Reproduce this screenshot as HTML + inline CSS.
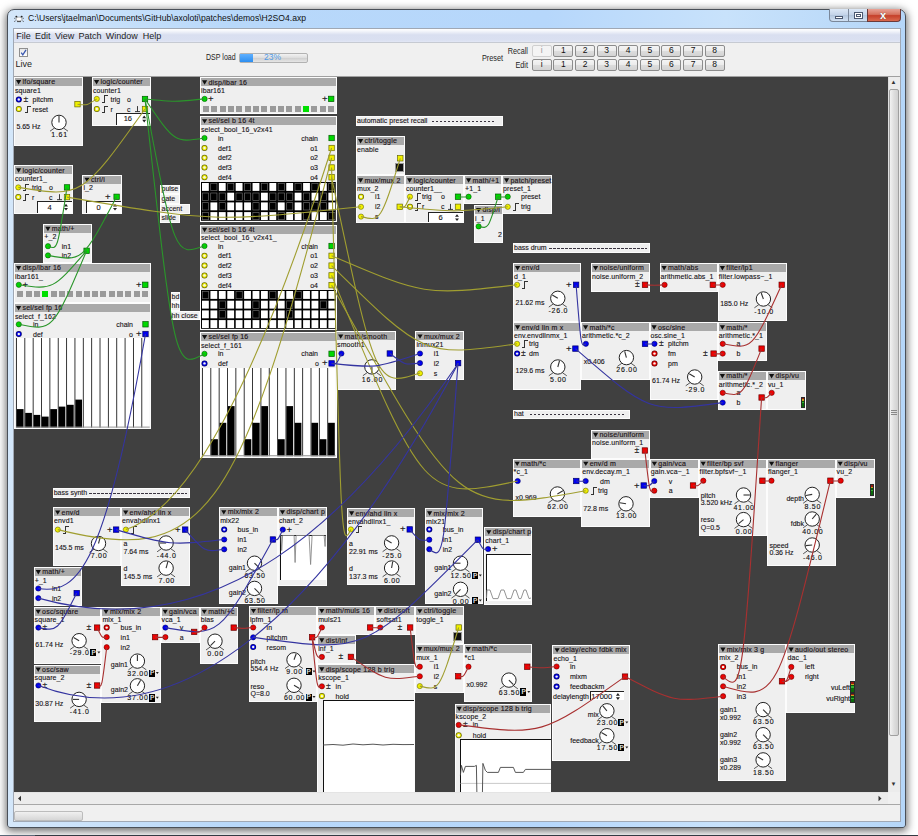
<!DOCTYPE html><html><head><meta charset="utf-8"><style>
*{margin:0;padding:0}
html,body{width:918px;height:836px;overflow:hidden;background:#fff;position:relative;font-family:"Liberation Sans",sans-serif}
.t{position:absolute;white-space:pre;line-height:1;font-family:"Liberation Sans",sans-serif}
.o{position:absolute;background:#efefef;border:1px solid #fcfcfc;box-sizing:border-box}
.hd{position:absolute;height:8px;background:#a9a9a9}
.s{position:absolute;overflow:visible}
.r{position:absolute}
</style></head><body>
<div style="position:absolute;left:7px;top:8.5px;width:899px;height:819px;border-radius:7px 7px 3px 3px;box-shadow:0 2px 9px 1px rgba(0,0,0,0.6);background:linear-gradient(90deg,#d4e7fa,#b8d8fa 25%,#b6d7fb 60%,#c8e2fb 80%,#b5d6f8);border:1px solid #4a5058;box-sizing:border-box"></div>
<svg style="position:absolute;left:13px;top:14px" width="12" height="10"><circle cx="3.4" cy="2.8" r="1" fill="#222"/><circle cx="8.6" cy="2.8" r="1" fill="#222"/><ellipse cx="6" cy="5" rx="3" ry="2" fill="#fff" stroke="#888" stroke-width="0.6"/><path d="M4 7.6h4" stroke="#333" stroke-width="0.9"/><path d="M1.2 4.2l1.2 0.6M10.8 4.2l-1.2 0.6M1.2 7.6l1.4-0.8M10.8 7.6l-1.4-0.8" stroke="#444" stroke-width="0.8"/></svg>
<div class="t" style="left:28px;top:14px;font-size:8.6px;color:#111">C:\Users\jtaelman\Documents\GitHub\axoloti\patches\demos\H2SO4.axp</div>
<div style="position:absolute;left:829px;top:9px;width:20px;height:13px;border:1px solid #7a8799;border-top:none;border-radius:0 0 0 4px;box-sizing:border-box;background:linear-gradient(#dce8f6,#c3d3e8 50%,#b3c6de 51%,#d0e0f2)"></div>
<div style="position:absolute;left:835px;top:16px;width:8px;height:3px;border:1px solid #4b5870;background:#fff;box-sizing:border-box"></div>
<div style="position:absolute;left:849px;top:9px;width:19px;height:13px;border:1px solid #7a8799;border-top:none;border-left:none;box-sizing:border-box;background:linear-gradient(#dce8f6,#c3d3e8 50%,#b3c6de 51%,#d0e0f2)"></div>
<div style="position:absolute;left:854px;top:12px;width:9px;height:7px;border:1px solid #4b5870;background:#fff;box-sizing:border-box"><div style="position:absolute;left:1px;top:1px;width:5px;height:3px;border:1px solid #4b5870;box-sizing:border-box"></div></div>
<div style="position:absolute;left:867px;top:9px;width:34px;height:13px;border:1px solid #6b3a3a;border-top:none;border-radius:0 0 4px 0;box-sizing:border-box;background:linear-gradient(#e8a397,#d6735f 45%,#c6402a 55%,#d9694e)"></div>
<div class="t" style="left:880px;top:9.5px;font-size:11px;font-weight:bold;color:#fff;text-shadow:0 0 1px #444">x</div>
<div style="position:absolute;left:13px;top:28px;width:888px;height:794px;background:#f0f0f0;border:1px solid #a0a8b4;box-sizing:border-box"></div>
<div style="position:absolute;left:14px;top:29px;width:886px;height:14px;background:linear-gradient(#ffffff,#f4f6fb 15%,#d9dff0 45%,#dae0f1 85%,#e2e7f5);border-bottom:1px solid #c6cad2;box-sizing:border-box"></div>
<div class="t" style="left:16.3px;top:31.5px;font-size:9px;color:#1e1e1e">File</div>
<div class="t" style="left:34.9px;top:31.5px;font-size:9px;color:#1e1e1e">Edit</div>
<div class="t" style="left:54.9px;top:31.5px;font-size:9px;color:#1e1e1e">View</div>
<div class="t" style="left:78.4px;top:31.5px;font-size:9px;color:#1e1e1e">Patch</div>
<div class="t" style="left:105.7px;top:31.5px;font-size:9px;color:#1e1e1e">Window</div>
<div class="t" style="left:142.7px;top:31.5px;font-size:9px;color:#1e1e1e">Help</div>
<div style="position:absolute;left:18.5px;top:47.5px;width:9px;height:9px;border:1px solid #8f8f8f;background:linear-gradient(#e6e6e6,#ffffff);box-sizing:border-box"></div>
<svg style="position:absolute;left:18.5px;top:47.5px" width="9" height="9"><path d="M2.2 4.6l1.6 2.2l3.2-5" stroke="#3a58b0" stroke-width="1.3" fill="none"/></svg>
<div class="t" style="left:15.5px;top:60px;font-size:9px;color:#1e1e1e">Live</div>
<div class="t" style="left:206px;top:53px;font-size:8.6px;color:#1e1e1e;transform:scaleX(0.82);transform-origin:0 0">DSP load</div>
<div style="position:absolute;left:238.5px;top:52.5px;width:69px;height:10px;border:1px solid #b2b2b2;border-radius:2px;background:linear-gradient(#f2f2f2,#dcdcdc 50%,#cfcfcf 51%,#e6e6e6);box-sizing:border-box"></div>
<div style="position:absolute;left:239.5px;top:53.5px;width:13.5px;height:8px;background:linear-gradient(#5fb0ff,#2d8ef0)"></div>
<div class="t" style="left:264px;top:52.5px;font-size:8.5px;color:#4f9ae6">23%</div>
<div class="t" style="left:482.4px;top:54px;font-size:8.6px;color:#1e1e1e;transform:scaleX(0.85);transform-origin:0 0">Preset</div>
<div class="t" style="left:498px;top:47px;width:30px;text-align:right;font-size:8.6px;color:#1e1e1e;transform:scaleX(0.85);transform-origin:100% 0">Recall</div>
<div class="t" style="left:498px;top:60.5px;width:30px;text-align:right;font-size:8.6px;color:#1e1e1e;transform:scaleX(0.85);transform-origin:100% 0">Edit</div>
<div style="position:absolute;left:531.8px;top:45.3px;width:20px;height:12px;border:1px solid #cfcfcf;border-radius:2px;background:#f4f4f4;box-sizing:border-box"></div>
<div class="t" style="left:531.8px;top:46.3px;width:20px;text-align:center;font-size:8.5px;color:#9a9a9a">i</div>
<div style="position:absolute;left:553.4px;top:45.3px;width:20px;height:12px;border:1px solid #8c8c8c;border-radius:2px;background:linear-gradient(#f4f4f4,#ebebeb 50%,#dddddd 51%,#d3d3d3);box-sizing:border-box"></div>
<div class="t" style="left:553.4px;top:46.3px;width:20px;text-align:center;font-size:8.5px;color:#111">1</div>
<div style="position:absolute;left:575.0px;top:45.3px;width:20px;height:12px;border:1px solid #8c8c8c;border-radius:2px;background:linear-gradient(#f4f4f4,#ebebeb 50%,#dddddd 51%,#d3d3d3);box-sizing:border-box"></div>
<div class="t" style="left:575.0px;top:46.3px;width:20px;text-align:center;font-size:8.5px;color:#111">2</div>
<div style="position:absolute;left:596.6px;top:45.3px;width:20px;height:12px;border:1px solid #8c8c8c;border-radius:2px;background:linear-gradient(#f4f4f4,#ebebeb 50%,#dddddd 51%,#d3d3d3);box-sizing:border-box"></div>
<div class="t" style="left:596.6px;top:46.3px;width:20px;text-align:center;font-size:8.5px;color:#111">3</div>
<div style="position:absolute;left:618.2px;top:45.3px;width:20px;height:12px;border:1px solid #8c8c8c;border-radius:2px;background:linear-gradient(#f4f4f4,#ebebeb 50%,#dddddd 51%,#d3d3d3);box-sizing:border-box"></div>
<div class="t" style="left:618.2px;top:46.3px;width:20px;text-align:center;font-size:8.5px;color:#111">4</div>
<div style="position:absolute;left:639.8px;top:45.3px;width:20px;height:12px;border:1px solid #8c8c8c;border-radius:2px;background:linear-gradient(#f4f4f4,#ebebeb 50%,#dddddd 51%,#d3d3d3);box-sizing:border-box"></div>
<div class="t" style="left:639.8px;top:46.3px;width:20px;text-align:center;font-size:8.5px;color:#111">5</div>
<div style="position:absolute;left:661.4px;top:45.3px;width:20px;height:12px;border:1px solid #8c8c8c;border-radius:2px;background:linear-gradient(#f4f4f4,#ebebeb 50%,#dddddd 51%,#d3d3d3);box-sizing:border-box"></div>
<div class="t" style="left:661.4px;top:46.3px;width:20px;text-align:center;font-size:8.5px;color:#111">6</div>
<div style="position:absolute;left:683.0px;top:45.3px;width:20px;height:12px;border:1px solid #8c8c8c;border-radius:2px;background:linear-gradient(#f4f4f4,#ebebeb 50%,#dddddd 51%,#d3d3d3);box-sizing:border-box"></div>
<div class="t" style="left:683.0px;top:46.3px;width:20px;text-align:center;font-size:8.5px;color:#111">7</div>
<div style="position:absolute;left:704.6px;top:45.3px;width:20px;height:12px;border:1px solid #8c8c8c;border-radius:2px;background:linear-gradient(#f4f4f4,#ebebeb 50%,#dddddd 51%,#d3d3d3);box-sizing:border-box"></div>
<div class="t" style="left:704.6px;top:46.3px;width:20px;text-align:center;font-size:8.5px;color:#111">8</div>
<div style="position:absolute;left:531.8px;top:59.1px;width:20px;height:12px;border:1px solid #8c8c8c;border-radius:2px;background:linear-gradient(#f4f4f4,#ebebeb 50%,#dddddd 51%,#d3d3d3);box-sizing:border-box"></div>
<div class="t" style="left:531.8px;top:60.1px;width:20px;text-align:center;font-size:8.5px;color:#111">i</div>
<div style="position:absolute;left:553.4px;top:59.1px;width:20px;height:12px;border:1px solid #8c8c8c;border-radius:2px;background:linear-gradient(#f4f4f4,#ebebeb 50%,#dddddd 51%,#d3d3d3);box-sizing:border-box"></div>
<div class="t" style="left:553.4px;top:60.1px;width:20px;text-align:center;font-size:8.5px;color:#111">1</div>
<div style="position:absolute;left:575.0px;top:59.1px;width:20px;height:12px;border:1px solid #8c8c8c;border-radius:2px;background:linear-gradient(#f4f4f4,#ebebeb 50%,#dddddd 51%,#d3d3d3);box-sizing:border-box"></div>
<div class="t" style="left:575.0px;top:60.1px;width:20px;text-align:center;font-size:8.5px;color:#111">2</div>
<div style="position:absolute;left:596.6px;top:59.1px;width:20px;height:12px;border:1px solid #8c8c8c;border-radius:2px;background:linear-gradient(#f4f4f4,#ebebeb 50%,#dddddd 51%,#d3d3d3);box-sizing:border-box"></div>
<div class="t" style="left:596.6px;top:60.1px;width:20px;text-align:center;font-size:8.5px;color:#111">3</div>
<div style="position:absolute;left:618.2px;top:59.1px;width:20px;height:12px;border:1px solid #8c8c8c;border-radius:2px;background:linear-gradient(#f4f4f4,#ebebeb 50%,#dddddd 51%,#d3d3d3);box-sizing:border-box"></div>
<div class="t" style="left:618.2px;top:60.1px;width:20px;text-align:center;font-size:8.5px;color:#111">4</div>
<div style="position:absolute;left:639.8px;top:59.1px;width:20px;height:12px;border:1px solid #8c8c8c;border-radius:2px;background:linear-gradient(#f4f4f4,#ebebeb 50%,#dddddd 51%,#d3d3d3);box-sizing:border-box"></div>
<div class="t" style="left:639.8px;top:60.1px;width:20px;text-align:center;font-size:8.5px;color:#111">5</div>
<div style="position:absolute;left:661.4px;top:59.1px;width:20px;height:12px;border:1px solid #8c8c8c;border-radius:2px;background:linear-gradient(#f4f4f4,#ebebeb 50%,#dddddd 51%,#d3d3d3);box-sizing:border-box"></div>
<div class="t" style="left:661.4px;top:60.1px;width:20px;text-align:center;font-size:8.5px;color:#111">6</div>
<div style="position:absolute;left:683.0px;top:59.1px;width:20px;height:12px;border:1px solid #8c8c8c;border-radius:2px;background:linear-gradient(#f4f4f4,#ebebeb 50%,#dddddd 51%,#d3d3d3);box-sizing:border-box"></div>
<div class="t" style="left:683.0px;top:60.1px;width:20px;text-align:center;font-size:8.5px;color:#111">7</div>
<div style="position:absolute;left:704.6px;top:59.1px;width:20px;height:12px;border:1px solid #8c8c8c;border-radius:2px;background:linear-gradient(#f4f4f4,#ebebeb 50%,#dddddd 51%,#d3d3d3);box-sizing:border-box"></div>
<div class="t" style="left:704.6px;top:60.1px;width:20px;text-align:center;font-size:8.5px;color:#111">8</div>
<div style="position:absolute;left:14px;top:76px;width:886px;height:1px;background:#a0a0a0"></div>
<div style="position:absolute;left:14px;top:77px;width:874px;height:715px;background:#404040"></div>
<div style="position:absolute;left:888px;top:77px;width:12px;height:715px;background:#ececec;border-left:1px solid #e0e0e0;box-sizing:border-box"></div>
<div style="position:absolute;left:889px;top:89px;width:10px;height:647px;border:1px solid #9f9f9f;border-radius:2px;background:linear-gradient(90deg,#f2f2f2,#dedede 50%,#d0d0d0);box-sizing:border-box"></div>
<div style="position:absolute;left:891px;top:410px;width:6px;height:6px;background:repeating-linear-gradient(#888 0 1px,transparent 1px 2px)"></div>
<div class="t" style="left:890.5px;top:79px;font-size:6px;color:#333">&#9650;</div>
<div class="t" style="left:890.5px;top:781px;font-size:6px;color:#333">&#9660;</div>
<div style="position:absolute;left:14px;top:792px;width:874px;height:12px;background:#ececec;border-top:1px solid #e4e4e4;box-sizing:border-box"></div>
<svg style="position:absolute;left:17px;top:795px" width="6" height="7"><path d="M1 3.5L4 0.8V6.2z" fill="#333"/></svg>
<svg style="position:absolute;left:877px;top:795px" width="6" height="7"><path d="M4.5 3.5L1.5 0.8V6.2z" fill="#333"/></svg>
<div style="position:absolute;left:888px;top:792px;width:12px;height:12px;background:#f0f0f0"></div>
<div style="position:absolute;left:14px;top:804px;width:886px;height:1px;background:#a8a8a8"></div>
<div style="position:absolute;left:14px;top:811px;width:69px;height:10px;border:1px solid #bcbcbc;border-radius:2px;background:linear-gradient(#f0f0f0,#d6d6d6);box-sizing:border-box"></div>
<div style="position:absolute;left:0;top:834.5px;width:918px;height:1.5px;background:#333a42"></div><div style="position:absolute;left:0;top:834.5px;width:35px;height:1.5px;background:#5a6878"></div>
<div style="position:absolute;left:0;top:0;width:918px;height:836px;clip-path:inset(77px 30px 44px 14px)">
<div class="o" style="left:14px;top:77px;width:69px;height:69px"></div>
<div class="hd" style="left:15px;top:78px;width:67px"></div>
<div class="t" style="left:22.5px;top:78.2px;font-size:7px;color:#1c1418;letter-spacing:0.2px;-webkit-text-stroke:0.15px #1c1418">lfo/square</div>
<div class="t" style="left:15.0px;top:86.6px;font-size:7px;color:#141014;letter-spacing:0.1px;-webkit-text-stroke:0.12px #201820">square1</div>

<div class="t" style="left:23.5px;top:94.8px;font-size:8.5px;color:#111;-webkit-text-stroke:0.12px #201820;">&#177;</div>
<div class="t" style="left:32.5px;top:96.0px;font-size:7px;color:#141014;-webkit-text-stroke:0.12px #201820;">pitchm</div>


<div class="t" style="left:32.5px;top:105.8px;font-size:7px;color:#141014;-webkit-text-stroke:0.12px #201820;">reset</div>

<div class="t" style="left:16.4px;top:122.5px;font-size:7px;color:#141014;-webkit-text-stroke:0.12px #201820;">5.65 Hz</div>
<div class="t" style="left:39.6px;width:40px;text-align:center;top:131.0px;font-size:7px;color:#0c0c0c;letter-spacing:0.75px;-webkit-text-stroke:0.12px #111">1.61</div>
<div class="o" style="left:92px;top:77px;width:59px;height:49px"></div>
<div class="hd" style="left:93px;top:78px;width:57px"></div>
<div class="t" style="left:100.5px;top:78.2px;font-size:7px;color:#1c1418;letter-spacing:0.2px;-webkit-text-stroke:0.15px #1c1418">logic/counter</div>
<div class="t" style="left:93.0px;top:86.6px;font-size:7px;color:#141014;letter-spacing:0.1px;-webkit-text-stroke:0.12px #201820">counter1</div>


<div class="t" style="left:110.5px;top:95.5px;font-size:7px;color:#141014;-webkit-text-stroke:0.12px #201820;">trig</div>
<div class="t" style="left:127.0px;top:95.5px;font-size:7px;color:#141014;-webkit-text-stroke:0.12px #201820;">o</div>


<div class="t" style="left:110.5px;top:105.5px;font-size:7px;color:#141014;-webkit-text-stroke:0.12px #201820;">r</div>
<div class="t" style="left:127.0px;top:105.5px;font-size:7px;color:#141014;-webkit-text-stroke:0.12px #201820;">c</div>



<div class="r" style="left:115.5px;top:113.2px;width:34.7px;height:11.6px;background:#fff;border-top:1px solid #222;border-left:1px solid #222;box-sizing:border-box"></div><div class="t" style="left:112.8px;width:30px;text-align:center;top:115.4px;font-size:7.5px;color:#111;-webkit-text-stroke:0.12px #201820;">16</div>
<div class="o" style="left:14px;top:165px;width:59px;height:49px"></div>
<div class="hd" style="left:15px;top:166px;width:57px"></div>
<div class="t" style="left:22.5px;top:166.5px;font-size:7px;color:#1c1418;letter-spacing:0.2px;-webkit-text-stroke:0.15px #1c1418">logic/counter</div>
<div class="t" style="left:15.0px;top:174.9px;font-size:7px;color:#141014;letter-spacing:0.1px;-webkit-text-stroke:0.12px #201820">counter1_</div>


<div class="t" style="left:32.0px;top:184.0px;font-size:7px;color:#141014;-webkit-text-stroke:0.12px #201820;">trig</div>
<div class="t" style="left:49.0px;top:184.0px;font-size:7px;color:#141014;-webkit-text-stroke:0.12px #201820;">o</div>


<div class="t" style="left:32.0px;top:193.7px;font-size:7px;color:#141014;-webkit-text-stroke:0.12px #201820;">r</div>
<div class="t" style="left:49.0px;top:193.7px;font-size:7px;color:#141014;-webkit-text-stroke:0.12px #201820;">c</div>



<div class="r" style="left:37.3px;top:201.4px;width:34.7px;height:11.6px;background:#fff;border-top:1px solid #222;border-left:1px solid #222;box-sizing:border-box"></div><div class="t" style="left:34.6px;width:30px;text-align:center;top:203.6px;font-size:7.5px;color:#111;-webkit-text-stroke:0.12px #201820;">4</div>
<div class="o" style="left:82px;top:175px;width:40px;height:39px"></div>
<div class="hd" style="left:83px;top:176px;width:38px"></div>
<div class="t" style="left:90.9px;top:175.9px;font-size:7px;color:#1c1418;letter-spacing:0.2px;-webkit-text-stroke:0.15px #1c1418">ctrl/i</div>
<div class="t" style="left:83.4px;top:184.3px;font-size:7px;color:#141014;letter-spacing:0.1px;-webkit-text-stroke:0.12px #201820">i_2</div>
<div class="t" style="left:105.0px;top:192.2px;font-size:9.5px;color:#000;-webkit-text-stroke:0.12px #201820;">+</div>

<div class="r" style="left:86.0px;top:201.4px;width:35.0px;height:11.6px;background:#fff;border-top:1px solid #222;border-left:1px solid #222;box-sizing:border-box"></div><div class="t" style="left:83.5px;width:30px;text-align:center;top:203.6px;font-size:7.5px;color:#111;-webkit-text-stroke:0.12px #201820;">0</div>
<div class="o" style="left:43px;top:224px;width:49px;height:39px"></div>
<div class="hd" style="left:44px;top:225px;width:47px"></div>
<div class="t" style="left:51.8px;top:225.0px;font-size:7px;color:#1c1418;letter-spacing:0.2px;-webkit-text-stroke:0.15px #1c1418">math/+</div>
<div class="t" style="left:44.3px;top:233.4px;font-size:7px;color:#141014;letter-spacing:0.1px;-webkit-text-stroke:0.12px #201820">+_2</div>

<div class="t" style="left:61.7px;top:242.8px;font-size:7px;color:#141014;-webkit-text-stroke:0.12px #201820;">in1</div>

<div class="t" style="left:61.7px;top:252.0px;font-size:7px;color:#141014;-webkit-text-stroke:0.12px #201820;">in2</div>

<div class="o" style="left:160px;top:185px;width:20px;height:9px"></div><div class="t" style="left:161.5px;top:185.2px;font-size:7px;color:#1a1418;-webkit-text-stroke:0.12px #201820;">pulse</div>
<div class="o" style="left:160px;top:194px;width:20px;height:10px"></div><div class="t" style="left:161.5px;top:194.8px;font-size:7px;color:#1a1418;-webkit-text-stroke:0.12px #201820;">gate</div>
<div class="o" style="left:160px;top:204px;width:30px;height:10px"></div><div class="t" style="left:161.5px;top:204.5px;font-size:7px;color:#1a1418;-webkit-text-stroke:0.12px #201820;">accent</div>
<div class="o" style="left:160px;top:214px;width:20px;height:9px"></div><div class="t" style="left:161.5px;top:214.1px;font-size:7px;color:#1a1418;-webkit-text-stroke:0.12px #201820;">slide</div>
<div class="o" style="left:171px;top:292px;width:9px;height:10px"></div><div class="t" style="left:171.6px;top:293.1px;font-size:7px;color:#1a1418;-webkit-text-stroke:0.12px #201820;">bd</div>
<div class="o" style="left:171px;top:302px;width:9px;height:9px"></div><div class="t" style="left:171.6px;top:302.4px;font-size:7px;color:#1a1418;-webkit-text-stroke:0.12px #201820;">hh</div>
<div class="o" style="left:171px;top:311px;width:29px;height:9px"></div><div class="t" style="left:171.6px;top:311.7px;font-size:7px;color:#1a1418;-webkit-text-stroke:0.12px #201820;">hh close</div>
<div class="o" style="left:200px;top:77px;width:137px;height:37px"></div>
<div class="hd" style="left:201px;top:78px;width:135px"></div>
<div class="t" style="left:208.5px;top:78.5px;font-size:7px;color:#1c1418;letter-spacing:0.2px;-webkit-text-stroke:0.15px #1c1418">disp/ibar 16</div>
<div class="t" style="left:201.0px;top:86.9px;font-size:7px;color:#141014;letter-spacing:0.1px;-webkit-text-stroke:0.12px #201820">ibar161</div>

<div class="t" style="left:208.0px;top:94.0px;font-size:9.5px;color:#000;-webkit-text-stroke:0.12px #201820;">+</div>
<div class="t" style="left:322.0px;top:94.0px;font-size:9.5px;color:#000;-webkit-text-stroke:0.12px #201820;">+</div>

<div class="r" style="left:202.8px;top:106.0px;width:6.1px;height:6.1px;background:#9a9a9a"></div><div class="r" style="left:211.1px;top:106.0px;width:6.1px;height:6.1px;background:#9a9a9a"></div><div class="r" style="left:219.5px;top:106.0px;width:6.1px;height:6.1px;background:#9a9a9a"></div><div class="r" style="left:227.8px;top:106.0px;width:6.1px;height:6.1px;background:#9a9a9a"></div><div class="r" style="left:236.2px;top:106.0px;width:6.1px;height:6.1px;background:#9a9a9a"></div><div class="r" style="left:244.5px;top:106.0px;width:6.1px;height:6.1px;background:#9a9a9a"></div><div class="r" style="left:252.9px;top:106.0px;width:6.1px;height:6.1px;background:#9a9a9a"></div><div class="r" style="left:261.2px;top:106.0px;width:6.1px;height:6.1px;background:#9a9a9a"></div><div class="r" style="left:269.6px;top:106.0px;width:6.1px;height:6.1px;background:#9a9a9a"></div><div class="r" style="left:277.9px;top:106.0px;width:6.1px;height:6.1px;background:#9a9a9a"></div><div class="r" style="left:286.2px;top:106.0px;width:6.1px;height:6.1px;background:#9a9a9a"></div><div class="r" style="left:294.6px;top:106.0px;width:6.1px;height:6.1px;background:#9a9a9a"></div><div class="r" style="left:302.9px;top:106.0px;width:6.1px;height:6.1px;background:#00e000"></div><div class="r" style="left:311.3px;top:106.0px;width:6.1px;height:6.1px;background:#9a9a9a"></div><div class="r" style="left:319.6px;top:106.0px;width:6.1px;height:6.1px;background:#9a9a9a"></div><div class="r" style="left:328.0px;top:106.0px;width:6.1px;height:6.1px;background:#9a9a9a"></div>
<div class="o" style="left:200px;top:116px;width:137px;height:106px"></div>
<div class="hd" style="left:201px;top:117px;width:135px"></div>
<div class="t" style="left:208.5px;top:117.4px;font-size:7px;color:#1c1418;letter-spacing:0.2px;-webkit-text-stroke:0.15px #1c1418">sel/sel b 16 4t</div>
<div class="t" style="left:201.0px;top:125.8px;font-size:7px;color:#141014;letter-spacing:0.1px;-webkit-text-stroke:0.12px #201820">select_bool_16_v2x41</div>

<div class="t" style="left:218.0px;top:134.5px;font-size:7px;color:#141014;-webkit-text-stroke:0.12px #201820;">in</div>
<div class="t" style="left:278.0px;width:40px;text-align:right;top:134.5px;font-size:7px;color:#141014;-webkit-text-stroke:0.12px #201820;">chain</div>


<div class="t" style="left:218.0px;top:144.5px;font-size:7px;color:#141014;-webkit-text-stroke:0.12px #201820;">def1</div>
<div class="t" style="left:298.0px;width:20px;text-align:right;top:144.5px;font-size:7px;color:#141014;-webkit-text-stroke:0.12px #201820;">o1</div>


<div class="t" style="left:218.0px;top:154.3px;font-size:7px;color:#141014;-webkit-text-stroke:0.12px #201820;">def2</div>
<div class="t" style="left:298.0px;width:20px;text-align:right;top:154.3px;font-size:7px;color:#141014;-webkit-text-stroke:0.12px #201820;">o2</div>


<div class="t" style="left:218.0px;top:164.0px;font-size:7px;color:#141014;-webkit-text-stroke:0.12px #201820;">def3</div>
<div class="t" style="left:298.0px;width:20px;text-align:right;top:164.0px;font-size:7px;color:#141014;-webkit-text-stroke:0.12px #201820;">o3</div>


<div class="t" style="left:218.0px;top:173.8px;font-size:7px;color:#141014;-webkit-text-stroke:0.12px #201820;">def4</div>
<div class="t" style="left:298.0px;width:20px;text-align:right;top:173.8px;font-size:7px;color:#141014;-webkit-text-stroke:0.12px #201820;">o4</div>

<svg class="s" style="left:200.8px;top:181.6px" width="134.8" height="38.8"><rect x="0" y="0" width="134.8" height="38.8" fill="#000"/><rect x="1.00" y="1.00" width="6.83" height="7.90" fill="#fff"/><rect x="9.43" y="1.00" width="6.83" height="7.90" fill="#777"/><rect x="10.03" y="1.60" width="5.63" height="6.70" fill="#000"/><rect x="17.85" y="1.00" width="6.83" height="7.90" fill="#fff"/><rect x="26.28" y="1.00" width="6.83" height="7.90" fill="#777"/><rect x="26.88" y="1.60" width="5.63" height="6.70" fill="#000"/><rect x="34.70" y="1.00" width="6.83" height="7.90" fill="#fff"/><rect x="43.12" y="1.00" width="6.83" height="7.90" fill="#777"/><rect x="43.73" y="1.60" width="5.63" height="6.70" fill="#000"/><rect x="51.55" y="1.00" width="6.83" height="7.90" fill="#fff"/><rect x="59.98" y="1.00" width="6.83" height="7.90" fill="#777"/><rect x="60.58" y="1.60" width="5.63" height="6.70" fill="#000"/><rect x="68.40" y="1.00" width="6.83" height="7.90" fill="#fff"/><rect x="76.83" y="1.00" width="6.83" height="7.90" fill="#777"/><rect x="77.42" y="1.60" width="5.63" height="6.70" fill="#000"/><rect x="85.25" y="1.00" width="6.83" height="7.90" fill="#fff"/><rect x="93.68" y="1.00" width="6.83" height="7.90" fill="#777"/><rect x="94.28" y="1.60" width="5.63" height="6.70" fill="#000"/><rect x="102.10" y="1.00" width="6.83" height="7.90" fill="#fff"/><rect x="110.53" y="1.00" width="6.83" height="7.90" fill="#777"/><rect x="111.12" y="1.60" width="5.63" height="6.70" fill="#000"/><rect x="118.95" y="1.00" width="6.83" height="7.90" fill="#fff"/><rect x="127.38" y="1.00" width="6.83" height="7.90" fill="#777"/><rect x="127.98" y="1.60" width="5.63" height="6.70" fill="#000"/><rect x="1.00" y="10.70" width="6.83" height="7.90" fill="#777"/><rect x="1.60" y="11.30" width="5.63" height="6.70" fill="#000"/><rect x="9.43" y="10.70" width="6.83" height="7.90" fill="#777"/><rect x="10.03" y="11.30" width="5.63" height="6.70" fill="#000"/><rect x="17.85" y="10.70" width="6.83" height="7.90" fill="#777"/><rect x="18.45" y="11.30" width="5.63" height="6.70" fill="#000"/><rect x="26.28" y="10.70" width="6.83" height="7.90" fill="#fff"/><rect x="34.70" y="10.70" width="6.83" height="7.90" fill="#777"/><rect x="35.30" y="11.30" width="5.63" height="6.70" fill="#000"/><rect x="43.12" y="10.70" width="6.83" height="7.90" fill="#777"/><rect x="43.73" y="11.30" width="5.63" height="6.70" fill="#000"/><rect x="51.55" y="10.70" width="6.83" height="7.90" fill="#777"/><rect x="52.15" y="11.30" width="5.63" height="6.70" fill="#000"/><rect x="59.98" y="10.70" width="6.83" height="7.90" fill="#fff"/><rect x="68.40" y="10.70" width="6.83" height="7.90" fill="#777"/><rect x="69.00" y="11.30" width="5.63" height="6.70" fill="#000"/><rect x="76.83" y="10.70" width="6.83" height="7.90" fill="#777"/><rect x="77.42" y="11.30" width="5.63" height="6.70" fill="#000"/><rect x="85.25" y="10.70" width="6.83" height="7.90" fill="#777"/><rect x="85.85" y="11.30" width="5.63" height="6.70" fill="#000"/><rect x="93.68" y="10.70" width="6.83" height="7.90" fill="#fff"/><rect x="102.10" y="10.70" width="6.83" height="7.90" fill="#777"/><rect x="102.70" y="11.30" width="5.63" height="6.70" fill="#000"/><rect x="110.53" y="10.70" width="6.83" height="7.90" fill="#fff"/><rect x="118.95" y="10.70" width="6.83" height="7.90" fill="#777"/><rect x="119.55" y="11.30" width="5.63" height="6.70" fill="#000"/><rect x="127.38" y="10.70" width="6.83" height="7.90" fill="#fff"/><rect x="1.00" y="20.40" width="6.83" height="7.90" fill="#777"/><rect x="1.60" y="21.00" width="5.63" height="6.70" fill="#000"/><rect x="9.43" y="20.40" width="6.83" height="7.90" fill="#fff"/><rect x="17.85" y="20.40" width="6.83" height="7.90" fill="#777"/><rect x="18.45" y="21.00" width="5.63" height="6.70" fill="#000"/><rect x="26.28" y="20.40" width="6.83" height="7.90" fill="#fff"/><rect x="34.70" y="20.40" width="6.83" height="7.90" fill="#fff"/><rect x="43.12" y="20.40" width="6.83" height="7.90" fill="#fff"/><rect x="51.55" y="20.40" width="6.83" height="7.90" fill="#777"/><rect x="52.15" y="21.00" width="5.63" height="6.70" fill="#000"/><rect x="59.98" y="20.40" width="6.83" height="7.90" fill="#fff"/><rect x="68.40" y="20.40" width="6.83" height="7.90" fill="#777"/><rect x="69.00" y="21.00" width="5.63" height="6.70" fill="#000"/><rect x="76.83" y="20.40" width="6.83" height="7.90" fill="#fff"/><rect x="85.25" y="20.40" width="6.83" height="7.90" fill="#777"/><rect x="85.85" y="21.00" width="5.63" height="6.70" fill="#000"/><rect x="93.68" y="20.40" width="6.83" height="7.90" fill="#fff"/><rect x="102.10" y="20.40" width="6.83" height="7.90" fill="#777"/><rect x="102.70" y="21.00" width="5.63" height="6.70" fill="#000"/><rect x="110.53" y="20.40" width="6.83" height="7.90" fill="#777"/><rect x="111.12" y="21.00" width="5.63" height="6.70" fill="#000"/><rect x="118.95" y="20.40" width="6.83" height="7.90" fill="#777"/><rect x="119.55" y="21.00" width="5.63" height="6.70" fill="#000"/><rect x="127.38" y="20.40" width="6.83" height="7.90" fill="#fff"/><rect x="1.00" y="30.10" width="6.83" height="7.90" fill="#777"/><rect x="1.60" y="30.70" width="5.63" height="6.70" fill="#000"/><rect x="9.43" y="30.10" width="6.83" height="7.90" fill="#fff"/><rect x="17.85" y="30.10" width="6.83" height="7.90" fill="#fff"/><rect x="26.28" y="30.10" width="6.83" height="7.90" fill="#fff"/><rect x="34.70" y="30.10" width="6.83" height="7.90" fill="#fff"/><rect x="43.12" y="30.10" width="6.83" height="7.90" fill="#fff"/><rect x="51.55" y="30.10" width="6.83" height="7.90" fill="#777"/><rect x="52.15" y="30.70" width="5.63" height="6.70" fill="#000"/><rect x="59.98" y="30.10" width="6.83" height="7.90" fill="#fff"/><rect x="68.40" y="30.10" width="6.83" height="7.90" fill="#fff"/><rect x="76.83" y="30.10" width="6.83" height="7.90" fill="#777"/><rect x="77.42" y="30.70" width="5.63" height="6.70" fill="#000"/><rect x="85.25" y="30.10" width="6.83" height="7.90" fill="#fff"/><rect x="93.68" y="30.10" width="6.83" height="7.90" fill="#fff"/><rect x="102.10" y="30.10" width="6.83" height="7.90" fill="#777"/><rect x="102.70" y="30.70" width="5.63" height="6.70" fill="#000"/><rect x="110.53" y="30.10" width="6.83" height="7.90" fill="#fff"/><rect x="118.95" y="30.10" width="6.83" height="7.90" fill="#fff"/><rect x="127.38" y="30.10" width="6.83" height="7.90" fill="#777"/><rect x="127.98" y="30.70" width="5.63" height="6.70" fill="#000"/></svg>
<div class="o" style="left:200px;top:225px;width:137px;height:105px"></div>
<div class="hd" style="left:201px;top:226px;width:135px"></div>
<div class="t" style="left:208.5px;top:226.0px;font-size:7px;color:#1c1418;letter-spacing:0.2px;-webkit-text-stroke:0.15px #1c1418">sel/sel b 16 4t</div>
<div class="t" style="left:201.0px;top:234.4px;font-size:7px;color:#141014;letter-spacing:0.1px;-webkit-text-stroke:0.12px #201820">select_bool_16_v2x41_</div>

<div class="t" style="left:218.0px;top:242.5px;font-size:7px;color:#141014;-webkit-text-stroke:0.12px #201820;">in</div>
<div class="t" style="left:278.0px;width:40px;text-align:right;top:242.5px;font-size:7px;color:#141014;-webkit-text-stroke:0.12px #201820;">chain</div>


<div class="t" style="left:218.0px;top:252.3px;font-size:7px;color:#141014;-webkit-text-stroke:0.12px #201820;">def1</div>
<div class="t" style="left:298.0px;width:20px;text-align:right;top:252.3px;font-size:7px;color:#141014;-webkit-text-stroke:0.12px #201820;">o1</div>


<div class="t" style="left:218.0px;top:262.1px;font-size:7px;color:#141014;-webkit-text-stroke:0.12px #201820;">def2</div>
<div class="t" style="left:298.0px;width:20px;text-align:right;top:262.1px;font-size:7px;color:#141014;-webkit-text-stroke:0.12px #201820;">o2</div>


<div class="t" style="left:218.0px;top:271.9px;font-size:7px;color:#141014;-webkit-text-stroke:0.12px #201820;">def3</div>
<div class="t" style="left:298.0px;width:20px;text-align:right;top:271.9px;font-size:7px;color:#141014;-webkit-text-stroke:0.12px #201820;">o3</div>


<div class="t" style="left:218.0px;top:281.7px;font-size:7px;color:#141014;-webkit-text-stroke:0.12px #201820;">def4</div>
<div class="t" style="left:298.0px;width:20px;text-align:right;top:281.7px;font-size:7px;color:#141014;-webkit-text-stroke:0.12px #201820;">o4</div>

<svg class="s" style="left:200.8px;top:289.6px" width="134.8" height="38.8"><rect x="0" y="0" width="134.8" height="38.8" fill="#000"/><rect x="1.00" y="1.00" width="6.83" height="7.90" fill="#777"/><rect x="1.60" y="1.60" width="5.63" height="6.70" fill="#000"/><rect x="9.43" y="1.00" width="6.83" height="7.90" fill="#fff"/><rect x="17.85" y="1.00" width="6.83" height="7.90" fill="#fff"/><rect x="26.28" y="1.00" width="6.83" height="7.90" fill="#fff"/><rect x="34.70" y="1.00" width="6.83" height="7.90" fill="#777"/><rect x="35.30" y="1.60" width="5.63" height="6.70" fill="#000"/><rect x="43.12" y="1.00" width="6.83" height="7.90" fill="#fff"/><rect x="51.55" y="1.00" width="6.83" height="7.90" fill="#fff"/><rect x="59.98" y="1.00" width="6.83" height="7.90" fill="#fff"/><rect x="68.40" y="1.00" width="6.83" height="7.90" fill="#777"/><rect x="69.00" y="1.60" width="5.63" height="6.70" fill="#000"/><rect x="76.83" y="1.00" width="6.83" height="7.90" fill="#fff"/><rect x="85.25" y="1.00" width="6.83" height="7.90" fill="#fff"/><rect x="93.68" y="1.00" width="6.83" height="7.90" fill="#777"/><rect x="94.28" y="1.60" width="5.63" height="6.70" fill="#000"/><rect x="102.10" y="1.00" width="6.83" height="7.90" fill="#fff"/><rect x="110.53" y="1.00" width="6.83" height="7.90" fill="#fff"/><rect x="118.95" y="1.00" width="6.83" height="7.90" fill="#fff"/><rect x="127.38" y="1.00" width="6.83" height="7.90" fill="#fff"/><rect x="1.00" y="10.70" width="6.83" height="7.90" fill="#fff"/><rect x="9.43" y="10.70" width="6.83" height="7.90" fill="#fff"/><rect x="17.85" y="10.70" width="6.83" height="7.90" fill="#777"/><rect x="18.45" y="11.30" width="5.63" height="6.70" fill="#000"/><rect x="26.28" y="10.70" width="6.83" height="7.90" fill="#fff"/><rect x="34.70" y="10.70" width="6.83" height="7.90" fill="#fff"/><rect x="43.12" y="10.70" width="6.83" height="7.90" fill="#fff"/><rect x="51.55" y="10.70" width="6.83" height="7.90" fill="#777"/><rect x="52.15" y="11.30" width="5.63" height="6.70" fill="#000"/><rect x="59.98" y="10.70" width="6.83" height="7.90" fill="#fff"/><rect x="68.40" y="10.70" width="6.83" height="7.90" fill="#fff"/><rect x="76.83" y="10.70" width="6.83" height="7.90" fill="#fff"/><rect x="85.25" y="10.70" width="6.83" height="7.90" fill="#777"/><rect x="85.85" y="11.30" width="5.63" height="6.70" fill="#000"/><rect x="93.68" y="10.70" width="6.83" height="7.90" fill="#fff"/><rect x="102.10" y="10.70" width="6.83" height="7.90" fill="#fff"/><rect x="110.53" y="10.70" width="6.83" height="7.90" fill="#fff"/><rect x="118.95" y="10.70" width="6.83" height="7.90" fill="#777"/><rect x="119.55" y="11.30" width="5.63" height="6.70" fill="#000"/><rect x="127.38" y="10.70" width="6.83" height="7.90" fill="#fff"/><rect x="1.00" y="20.40" width="6.83" height="7.90" fill="#fff"/><rect x="9.43" y="20.40" width="6.83" height="7.90" fill="#fff"/><rect x="17.85" y="20.40" width="6.83" height="7.90" fill="#777"/><rect x="18.45" y="21.00" width="5.63" height="6.70" fill="#000"/><rect x="26.28" y="20.40" width="6.83" height="7.90" fill="#fff"/><rect x="34.70" y="20.40" width="6.83" height="7.90" fill="#fff"/><rect x="43.12" y="20.40" width="6.83" height="7.90" fill="#fff"/><rect x="51.55" y="20.40" width="6.83" height="7.90" fill="#777"/><rect x="52.15" y="21.00" width="5.63" height="6.70" fill="#000"/><rect x="59.98" y="20.40" width="6.83" height="7.90" fill="#fff"/><rect x="68.40" y="20.40" width="6.83" height="7.90" fill="#fff"/><rect x="76.83" y="20.40" width="6.83" height="7.90" fill="#fff"/><rect x="85.25" y="20.40" width="6.83" height="7.90" fill="#777"/><rect x="85.85" y="21.00" width="5.63" height="6.70" fill="#000"/><rect x="93.68" y="20.40" width="6.83" height="7.90" fill="#fff"/><rect x="102.10" y="20.40" width="6.83" height="7.90" fill="#fff"/><rect x="110.53" y="20.40" width="6.83" height="7.90" fill="#fff"/><rect x="118.95" y="20.40" width="6.83" height="7.90" fill="#fff"/><rect x="127.38" y="20.40" width="6.83" height="7.90" fill="#fff"/><rect x="1.00" y="30.10" width="6.83" height="7.90" fill="#fff"/><rect x="9.43" y="30.10" width="6.83" height="7.90" fill="#fff"/><rect x="17.85" y="30.10" width="6.83" height="7.90" fill="#fff"/><rect x="26.28" y="30.10" width="6.83" height="7.90" fill="#fff"/><rect x="34.70" y="30.10" width="6.83" height="7.90" fill="#fff"/><rect x="43.12" y="30.10" width="6.83" height="7.90" fill="#fff"/><rect x="51.55" y="30.10" width="6.83" height="7.90" fill="#fff"/><rect x="59.98" y="30.10" width="6.83" height="7.90" fill="#fff"/><rect x="68.40" y="30.10" width="6.83" height="7.90" fill="#fff"/><rect x="76.83" y="30.10" width="6.83" height="7.90" fill="#fff"/><rect x="85.25" y="30.10" width="6.83" height="7.90" fill="#fff"/><rect x="93.68" y="30.10" width="6.83" height="7.90" fill="#fff"/><rect x="102.10" y="30.10" width="6.83" height="7.90" fill="#fff"/><rect x="110.53" y="30.10" width="6.83" height="7.90" fill="#fff"/><rect x="118.95" y="30.10" width="6.83" height="7.90" fill="#fff"/><rect x="127.38" y="30.10" width="6.83" height="7.90" fill="#fff"/></svg>
<div class="o" style="left:14px;top:263px;width:137px;height:40px"></div>
<div class="hd" style="left:15px;top:264px;width:135px"></div>
<div class="t" style="left:22.5px;top:264.2px;font-size:7px;color:#1c1418;letter-spacing:0.2px;-webkit-text-stroke:0.15px #1c1418">disp/ibar 16</div>
<div class="t" style="left:15.0px;top:272.6px;font-size:7px;color:#141014;letter-spacing:0.1px;-webkit-text-stroke:0.12px #201820">ibar161_</div>

<div class="t" style="left:22.5px;top:279.9px;font-size:9.5px;color:#000;-webkit-text-stroke:0.12px #201820;">+</div>
<div class="t" style="left:136.0px;top:279.9px;font-size:9.5px;color:#000;-webkit-text-stroke:0.12px #201820;">+</div>

<div class="r" style="left:17.3px;top:291.4px;width:6.1px;height:6.1px;background:#9a9a9a"></div><div class="r" style="left:25.6px;top:291.4px;width:6.1px;height:6.1px;background:#9a9a9a"></div><div class="r" style="left:33.9px;top:291.4px;width:6.1px;height:6.1px;background:#9a9a9a"></div><div class="r" style="left:42.2px;top:291.4px;width:6.1px;height:6.1px;background:#00e000"></div><div class="r" style="left:50.5px;top:291.4px;width:6.1px;height:6.1px;background:#9a9a9a"></div><div class="r" style="left:58.9px;top:291.4px;width:6.1px;height:6.1px;background:#9a9a9a"></div><div class="r" style="left:67.2px;top:291.4px;width:6.1px;height:6.1px;background:#9a9a9a"></div><div class="r" style="left:75.5px;top:291.4px;width:6.1px;height:6.1px;background:#9a9a9a"></div><div class="r" style="left:83.8px;top:291.4px;width:6.1px;height:6.1px;background:#9a9a9a"></div><div class="r" style="left:92.1px;top:291.4px;width:6.1px;height:6.1px;background:#9a9a9a"></div><div class="r" style="left:100.4px;top:291.4px;width:6.1px;height:6.1px;background:#9a9a9a"></div><div class="r" style="left:108.7px;top:291.4px;width:6.1px;height:6.1px;background:#9a9a9a"></div><div class="r" style="left:117.0px;top:291.4px;width:6.1px;height:6.1px;background:#9a9a9a"></div><div class="r" style="left:125.4px;top:291.4px;width:6.1px;height:6.1px;background:#9a9a9a"></div><div class="r" style="left:133.7px;top:291.4px;width:6.1px;height:6.1px;background:#9a9a9a"></div><div class="r" style="left:142.0px;top:291.4px;width:6.1px;height:6.1px;background:#9a9a9a"></div>
<div class="o" style="left:14px;top:303px;width:137px;height:126px"></div>
<div class="hd" style="left:15px;top:304px;width:135px"></div>
<div class="t" style="left:22.5px;top:304.2px;font-size:7px;color:#1c1418;letter-spacing:0.2px;-webkit-text-stroke:0.15px #1c1418">sel/sel fp 16</div>
<div class="t" style="left:15.0px;top:312.6px;font-size:7px;color:#141014;letter-spacing:0.1px;-webkit-text-stroke:0.12px #201820">select_f_162</div>

<div class="t" style="left:33.0px;top:320.8px;font-size:7px;color:#141014;-webkit-text-stroke:0.12px #201820;">in</div>
<div class="t" style="left:93.0px;width:40px;text-align:right;top:320.8px;font-size:7px;color:#141014;-webkit-text-stroke:0.12px #201820;">chain</div>


<div class="t" style="left:33.0px;top:330.5px;font-size:7px;color:#141014;-webkit-text-stroke:0.12px #201820;">def</div>
<div class="t" style="left:113.0px;width:20px;text-align:right;top:330.5px;font-size:7px;color:#141014;-webkit-text-stroke:0.12px #201820;">o</div>
<div class="t" style="left:136.0px;top:328.7px;font-size:9.5px;color:#000;-webkit-text-stroke:0.12px #201820;">+</div>

<svg class="s" style="left:16.3px;top:338.4px" width="133.7" height="89.6"><rect x="0" y="0" width="133.7" height="89.6" fill="#fff"/><rect x="0.80" y="71.10" width="6.76" height="18.50" fill="#000"/><rect x="0.00" y="0" width="0.9" height="89.6" fill="#222"/><rect x="9.16" y="74.90" width="6.76" height="14.70" fill="#000"/><rect x="8.36" y="0" width="0.9" height="89.6" fill="#222"/><rect x="17.51" y="76.90" width="6.76" height="12.70" fill="#000"/><rect x="16.71" y="0" width="0.9" height="89.6" fill="#222"/><rect x="25.87" y="78.60" width="6.76" height="11.00" fill="#000"/><rect x="25.07" y="0" width="0.9" height="89.6" fill="#222"/><rect x="34.22" y="71.10" width="6.76" height="18.50" fill="#000"/><rect x="33.42" y="0" width="0.9" height="89.6" fill="#222"/><rect x="42.58" y="68.60" width="6.76" height="21.00" fill="#000"/><rect x="41.78" y="0" width="0.9" height="89.6" fill="#222"/><rect x="50.94" y="66.80" width="6.76" height="22.80" fill="#000"/><rect x="50.14" y="0" width="0.9" height="89.6" fill="#222"/><rect x="59.29" y="61.60" width="6.76" height="28.00" fill="#000"/><rect x="58.49" y="0" width="0.9" height="89.6" fill="#222"/><rect x="66.85" y="0" width="0.9" height="89.6" fill="#222"/><rect x="75.21" y="0" width="0.9" height="89.6" fill="#222"/><rect x="83.56" y="0" width="0.9" height="89.6" fill="#222"/><rect x="91.92" y="0" width="0.9" height="89.6" fill="#222"/><rect x="100.27" y="0" width="0.9" height="89.6" fill="#222"/><rect x="108.63" y="0" width="0.9" height="89.6" fill="#222"/><rect x="116.99" y="0" width="0.9" height="89.6" fill="#222"/><rect x="125.34" y="0" width="0.9" height="89.6" fill="#222"/><rect x="0" y="88.6" width="133.7" height="1" fill="#999"/></svg>
<div class="o" style="left:200px;top:332px;width:137px;height:126px"></div>
<div class="hd" style="left:201px;top:333px;width:135px"></div>
<div class="t" style="left:208.5px;top:333.2px;font-size:7px;color:#1c1418;letter-spacing:0.2px;-webkit-text-stroke:0.15px #1c1418">sel/sel fp 16</div>
<div class="t" style="left:201.0px;top:341.6px;font-size:7px;color:#141014;letter-spacing:0.1px;-webkit-text-stroke:0.12px #201820">select_f_161</div>

<div class="t" style="left:218.0px;top:350.3px;font-size:7px;color:#141014;-webkit-text-stroke:0.12px #201820;">in</div>
<div class="t" style="left:278.0px;width:40px;text-align:right;top:350.3px;font-size:7px;color:#141014;-webkit-text-stroke:0.12px #201820;">chain</div>


<div class="t" style="left:218.0px;top:359.9px;font-size:7px;color:#141014;-webkit-text-stroke:0.12px #201820;">def</div>
<div class="t" style="left:299.0px;width:20px;text-align:right;top:359.9px;font-size:7px;color:#141014;-webkit-text-stroke:0.12px #201820;">o</div>
<div class="t" style="left:322.0px;top:358.1px;font-size:9.5px;color:#000;-webkit-text-stroke:0.12px #201820;">+</div>

<svg class="s" style="left:202.0px;top:368.2px" width="133.6" height="88.2"><rect x="0" y="0" width="133.6" height="88.2" fill="#fff"/><rect x="0.00" y="0" width="0.9" height="88.2" fill="#222"/><rect x="9.15" y="71.20" width="6.75" height="17.00" fill="#000"/><rect x="8.35" y="0" width="0.9" height="88.2" fill="#222"/><rect x="17.50" y="54.80" width="6.75" height="33.40" fill="#000"/><rect x="16.70" y="0" width="0.9" height="88.2" fill="#222"/><rect x="25.85" y="38.10" width="6.75" height="50.10" fill="#000"/><rect x="25.05" y="0" width="0.9" height="88.2" fill="#222"/><rect x="33.40" y="0" width="0.9" height="88.2" fill="#222"/><rect x="42.55" y="71.20" width="6.75" height="17.00" fill="#000"/><rect x="41.75" y="0" width="0.9" height="88.2" fill="#222"/><rect x="50.90" y="54.80" width="6.75" height="33.40" fill="#000"/><rect x="50.10" y="0" width="0.9" height="88.2" fill="#222"/><rect x="59.25" y="38.10" width="6.75" height="50.10" fill="#000"/><rect x="58.45" y="0" width="0.9" height="88.2" fill="#222"/><rect x="66.80" y="0" width="0.9" height="88.2" fill="#222"/><rect x="75.95" y="71.20" width="6.75" height="17.00" fill="#000"/><rect x="75.15" y="0" width="0.9" height="88.2" fill="#222"/><rect x="84.30" y="38.10" width="6.75" height="50.10" fill="#000"/><rect x="83.50" y="0" width="0.9" height="88.2" fill="#222"/><rect x="92.65" y="54.80" width="6.75" height="33.40" fill="#000"/><rect x="91.85" y="0" width="0.9" height="88.2" fill="#222"/><rect x="100.20" y="0" width="0.9" height="88.2" fill="#222"/><rect x="109.35" y="54.80" width="6.75" height="33.40" fill="#000"/><rect x="108.55" y="0" width="0.9" height="88.2" fill="#222"/><rect x="117.70" y="71.20" width="6.75" height="17.00" fill="#000"/><rect x="116.90" y="0" width="0.9" height="88.2" fill="#222"/><rect x="126.05" y="54.80" width="6.75" height="33.40" fill="#000"/><rect x="125.25" y="0" width="0.9" height="88.2" fill="#222"/><rect x="0" y="87.2" width="133.6" height="1" fill="#999"/></svg>
<div class="o" style="left:356px;top:116px;width:147px;height:10px"></div><div class="t" style="left:357.0px;top:116.6px;font-size:7px;color:#1a1418;-webkit-text-stroke:0.12px #201820;">automatic preset recall</div><div class="r" style="left:432.0px;top:120.6px;width:62.0px;height:1.3px;background:repeating-linear-gradient(90deg,#3a3440 0 2.5px,transparent 2.5px 4px)"></div>
<div class="o" style="left:356px;top:136px;width:49px;height:39px"></div>
<div class="hd" style="left:357px;top:137px;width:47px"></div>
<div class="t" style="left:364.5px;top:137.2px;font-size:7px;color:#1c1418;letter-spacing:0.2px;-webkit-text-stroke:0.15px #1c1418">ctrl/toggle</div>
<div class="t" style="left:357.0px;top:145.6px;font-size:7px;color:#141014;letter-spacing:0.1px;-webkit-text-stroke:0.12px #201820">enable</div>

<div class="r" style="left:394.7px;top:162.8px;width:9px;height:9.6px;background:#111;border:1px solid #9a9a9a;box-sizing:border-box"></div>
<div class="o" style="left:356px;top:175px;width:49px;height:48px"></div>
<div class="hd" style="left:357px;top:176px;width:47px"></div>
<div class="t" style="left:364.5px;top:176.5px;font-size:7px;color:#1c1418;letter-spacing:0.2px;-webkit-text-stroke:0.15px #1c1418">mux/mux 2</div>
<div class="t" style="left:357.0px;top:184.9px;font-size:7px;color:#141014;letter-spacing:0.1px;-webkit-text-stroke:0.12px #201820">mux_2</div>

<div class="t" style="left:375.0px;top:193.2px;font-size:7px;color:#141014;-webkit-text-stroke:0.12px #201820;">i1</div>

<div class="t" style="left:375.0px;top:203.3px;font-size:7px;color:#141014;-webkit-text-stroke:0.12px #201820;">i2</div>

<div class="t" style="left:375.0px;top:213.1px;font-size:7px;color:#141014;-webkit-text-stroke:0.12px #201820;">s</div>

<div class="o" style="left:405px;top:175px;width:59px;height:48px"></div>
<div class="hd" style="left:406px;top:176px;width:57px"></div>
<div class="t" style="left:413.5px;top:176.5px;font-size:7px;color:#1c1418;letter-spacing:0.2px;-webkit-text-stroke:0.15px #1c1418">logic/counter</div>
<div class="t" style="left:406.0px;top:184.9px;font-size:7px;color:#141014;letter-spacing:0.1px;-webkit-text-stroke:0.12px #201820">counter1__</div>


<div class="t" style="left:422.0px;top:193.2px;font-size:7px;color:#141014;-webkit-text-stroke:0.12px #201820;">trig</div>
<div class="t" style="left:441.0px;top:193.2px;font-size:7px;color:#141014;-webkit-text-stroke:0.12px #201820;">o</div>


<div class="t" style="left:422.0px;top:203.3px;font-size:7px;color:#141014;-webkit-text-stroke:0.12px #201820;">r</div>
<div class="t" style="left:441.0px;top:203.3px;font-size:7px;color:#141014;-webkit-text-stroke:0.12px #201820;">c</div>



<div class="r" style="left:428.4px;top:211.8px;width:34.6px;height:10.7px;background:#fff;border-top:1px solid #222;border-left:1px solid #222;box-sizing:border-box"></div><div class="t" style="left:425.7px;width:30px;text-align:center;top:214.0px;font-size:7.5px;color:#111;-webkit-text-stroke:0.12px #201820;">6</div>
<div class="o" style="left:464px;top:175px;width:38px;height:29px"></div>
<div class="hd" style="left:465px;top:176px;width:36px"></div>
<div class="t" style="left:472.5px;top:176.5px;font-size:7px;color:#1c1418;letter-spacing:0.2px;-webkit-text-stroke:0.15px #1c1418">math/+1</div>
<div class="t" style="left:465.0px;top:184.9px;font-size:7px;color:#141014;letter-spacing:0.1px;-webkit-text-stroke:0.12px #201820">+1_1</div>


<div class="o" style="left:502px;top:175px;width:50px;height:39px"></div>
<div class="hd" style="left:503px;top:176px;width:48px"></div>
<div class="t" style="left:510.5px;top:176.5px;font-size:7px;color:#1c1418;letter-spacing:0.2px;-webkit-text-stroke:0.15px #1c1418">patch/preset</div>
<div class="t" style="left:503.0px;top:184.9px;font-size:7px;color:#141014;letter-spacing:0.1px;-webkit-text-stroke:0.12px #201820">preset_1</div>

<div class="t" style="left:521.0px;top:193.2px;font-size:7px;color:#141014;-webkit-text-stroke:0.12px #201820;">preset</div>


<div class="t" style="left:521.0px;top:203.3px;font-size:7px;color:#141014;-webkit-text-stroke:0.12px #201820;">trig</div>
<div class="o" style="left:474px;top:205px;width:29px;height:38px"></div>
<div class="hd" style="left:475px;top:206px;width:27px"></div>
<div class="t" style="left:482.5px;top:206.2px;font-size:7px;color:#1c1418;letter-spacing:0.2px;-webkit-text-stroke:0.15px #1c1418">disp/i</div>
<div class="t" style="left:475.0px;top:214.6px;font-size:7px;color:#141014;letter-spacing:0.1px;-webkit-text-stroke:0.12px #201820">i_1</div>

<div class="t" style="left:492.0px;width:10px;text-align:right;top:231.0px;font-size:7px;color:#141014;-webkit-text-stroke:0.12px #201820;">2</div>
<div class="o" style="left:513px;top:243px;width:137px;height:10px"></div><div class="t" style="left:514.0px;top:243.9px;font-size:7px;color:#1a1418;-webkit-text-stroke:0.12px #201820;">bass drum</div><div class="r" style="left:549.0px;top:247.9px;width:98.0px;height:1.3px;background:repeating-linear-gradient(90deg,#3a3440 0 2.5px,transparent 2.5px 4px)"></div>
<div class="o" style="left:513px;top:263px;width:68px;height:59px"></div>
<div class="hd" style="left:514px;top:264px;width:66px"></div>
<div class="t" style="left:521.5px;top:264.2px;font-size:7px;color:#1c1418;letter-spacing:0.2px;-webkit-text-stroke:0.15px #1c1418">env/d</div>
<div class="t" style="left:514.0px;top:272.6px;font-size:7px;color:#141014;letter-spacing:0.1px;-webkit-text-stroke:0.12px #201820">d_1</div>


<div class="t" style="left:566.0px;top:279.7px;font-size:9.5px;color:#000;-webkit-text-stroke:0.12px #201820;">+</div>

<div class="t" style="left:515.6px;top:299.0px;font-size:7px;color:#141014;-webkit-text-stroke:0.12px #201820;">21.62 ms</div>
<div class="t" style="left:538.4px;width:40px;text-align:center;top:306.9px;font-size:7px;color:#0c0c0c;letter-spacing:0.75px;-webkit-text-stroke:0.12px #111">-26.0</div>
<div class="o" style="left:591px;top:263px;width:59px;height:29px"></div>
<div class="hd" style="left:592px;top:264px;width:57px"></div>
<div class="t" style="left:599.5px;top:264.2px;font-size:7px;color:#1c1418;letter-spacing:0.2px;-webkit-text-stroke:0.15px #1c1418">noise/uniform</div>
<div class="t" style="left:592.0px;top:272.6px;font-size:7px;color:#141014;letter-spacing:0.1px;-webkit-text-stroke:0.12px #201820">noise.uniform_2</div>
<div class="t" style="left:635.0px;top:279.8px;font-size:8.5px;color:#111;-webkit-text-stroke:0.12px #201820;">&#177;</div>

<div class="o" style="left:660px;top:263px;width:58px;height:29px"></div>
<div class="hd" style="left:661px;top:264px;width:56px"></div>
<div class="t" style="left:668.0px;top:264.2px;font-size:7px;color:#1c1418;letter-spacing:0.2px;-webkit-text-stroke:0.15px #1c1418">math/abs</div>
<div class="t" style="left:660.5px;top:272.6px;font-size:7px;color:#141014;letter-spacing:0.1px;-webkit-text-stroke:0.12px #201820">arithmetic.abs_1</div>


<div class="o" style="left:718px;top:263px;width:69px;height:58px"></div>
<div class="hd" style="left:719px;top:264px;width:67px"></div>
<div class="t" style="left:726.3px;top:264.2px;font-size:7px;color:#1c1418;letter-spacing:0.2px;-webkit-text-stroke:0.15px #1c1418">filter/lp1</div>
<div class="t" style="left:718.8px;top:272.6px;font-size:7px;color:#141014;letter-spacing:0.1px;-webkit-text-stroke:0.12px #201820">filter.lowpass~_1</div>


<div class="t" style="left:720.2px;top:299.5px;font-size:7px;color:#141014;-webkit-text-stroke:0.12px #201820;">185.0 Hz</div>
<div class="t" style="left:744.0px;width:40px;text-align:center;top:307.6px;font-size:7px;color:#0c0c0c;letter-spacing:0.75px;-webkit-text-stroke:0.12px #111">-10.0</div>
<div class="o" style="left:513px;top:322px;width:68px;height:68px"></div>
<div class="hd" style="left:514px;top:323px;width:66px"></div>
<div class="t" style="left:521.5px;top:323.5px;font-size:7px;color:#1c1418;letter-spacing:0.2px;-webkit-text-stroke:0.15px #1c1418">env/d lin m x</div>
<div class="t" style="left:514.0px;top:331.9px;font-size:7px;color:#141014;letter-spacing:0.1px;-webkit-text-stroke:0.12px #201820">env.envdlinmx_1</div>


<div class="t" style="left:529.0px;top:340.3px;font-size:7px;color:#141014;-webkit-text-stroke:0.12px #201820;">trig</div>

<div class="t" style="left:521.0px;top:348.8px;font-size:8.5px;color:#111;-webkit-text-stroke:0.12px #201820;">&#177;</div>
<div class="t" style="left:529.0px;top:350.1px;font-size:7px;color:#141014;-webkit-text-stroke:0.12px #201820;">dm</div>
<div class="t" style="left:566.0px;top:343.7px;font-size:9.5px;color:#000;-webkit-text-stroke:0.12px #201820;">+</div>

<div class="t" style="left:515.6px;top:367.3px;font-size:7px;color:#141014;-webkit-text-stroke:0.12px #201820;">129.6 ms</div>
<div class="t" style="left:538.4px;width:40px;text-align:center;top:375.6px;font-size:7px;color:#0c0c0c;letter-spacing:0.75px;-webkit-text-stroke:0.12px #111">5.00</div>
<div class="o" style="left:581px;top:322px;width:69px;height:58px"></div>
<div class="hd" style="left:582px;top:323px;width:67px"></div>
<div class="t" style="left:589.5px;top:323.5px;font-size:7px;color:#1c1418;letter-spacing:0.2px;-webkit-text-stroke:0.15px #1c1418">math/*c</div>
<div class="t" style="left:582.0px;top:331.9px;font-size:7px;color:#141014;letter-spacing:0.1px;-webkit-text-stroke:0.12px #201820">arithmetic.*c_2</div>


<div class="t" style="left:583.7px;top:357.8px;font-size:7px;color:#141014;-webkit-text-stroke:0.12px #201820;">x0.406</div>
<div class="t" style="left:607.0px;width:40px;text-align:center;top:366.2px;font-size:7px;color:#0c0c0c;letter-spacing:0.75px;-webkit-text-stroke:0.12px #111">26.00</div>
<div class="o" style="left:650px;top:322px;width:68px;height:78px"></div>
<div class="hd" style="left:651px;top:323px;width:66px"></div>
<div class="t" style="left:658.0px;top:323.5px;font-size:7px;color:#1c1418;letter-spacing:0.2px;-webkit-text-stroke:0.15px #1c1418">osc/sine</div>
<div class="t" style="left:650.5px;top:331.9px;font-size:7px;color:#141014;letter-spacing:0.1px;-webkit-text-stroke:0.12px #201820">osc.sine_1</div>

<div class="t" style="left:659.0px;top:339.0px;font-size:8.5px;color:#111;-webkit-text-stroke:0.12px #201820;">&#177;</div>
<div class="t" style="left:668.0px;top:340.3px;font-size:7px;color:#141014;-webkit-text-stroke:0.12px #201820;">pitchm</div>

<div class="t" style="left:668.0px;top:350.1px;font-size:7px;color:#141014;-webkit-text-stroke:0.12px #201820;">fm</div>

<div class="t" style="left:668.0px;top:359.9px;font-size:7px;color:#141014;-webkit-text-stroke:0.12px #201820;">pm</div>
<div class="t" style="left:703.0px;top:348.8px;font-size:8.5px;color:#111;-webkit-text-stroke:0.12px #201820;">&#177;</div>

<div class="t" style="left:652.0px;top:377.4px;font-size:7px;color:#141014;-webkit-text-stroke:0.12px #201820;">61.74 Hz</div>
<div class="t" style="left:675.3px;width:40px;text-align:center;top:385.6px;font-size:7px;color:#0c0c0c;letter-spacing:0.75px;-webkit-text-stroke:0.12px #111">-29.0</div>
<div class="o" style="left:718px;top:322px;width:49px;height:39px"></div>
<div class="hd" style="left:719px;top:323px;width:47px"></div>
<div class="t" style="left:726.3px;top:323.5px;font-size:7px;color:#1c1418;letter-spacing:0.2px;-webkit-text-stroke:0.15px #1c1418">math/*</div>
<div class="t" style="left:718.8px;top:331.9px;font-size:7px;color:#141014;letter-spacing:0.1px;-webkit-text-stroke:0.12px #201820">arithmetic.*_1</div>

<div class="t" style="left:736.5px;top:340.3px;font-size:7px;color:#141014;-webkit-text-stroke:0.12px #201820;">a</div>

<div class="t" style="left:736.5px;top:350.1px;font-size:7px;color:#141014;-webkit-text-stroke:0.12px #201820;">b</div>

<div class="o" style="left:718px;top:371px;width:49px;height:39px"></div>
<div class="hd" style="left:719px;top:372px;width:47px"></div>
<div class="t" style="left:726.3px;top:372.2px;font-size:7px;color:#1c1418;letter-spacing:0.2px;-webkit-text-stroke:0.15px #1c1418">math/*</div>
<div class="t" style="left:718.8px;top:380.6px;font-size:7px;color:#141014;letter-spacing:0.1px;-webkit-text-stroke:0.12px #201820">arithmetic.*_2</div>

<div class="t" style="left:736.5px;top:389.3px;font-size:7px;color:#141014;-webkit-text-stroke:0.12px #201820;">a</div>

<div class="t" style="left:736.5px;top:399.1px;font-size:7px;color:#141014;-webkit-text-stroke:0.12px #201820;">b</div>

<div class="o" style="left:767px;top:371px;width:39px;height:39px"></div>
<div class="hd" style="left:768px;top:372px;width:37px"></div>
<div class="t" style="left:775.5px;top:372.2px;font-size:7px;color:#1c1418;letter-spacing:0.2px;-webkit-text-stroke:0.15px #1c1418">disp/vu</div>
<div class="t" style="left:768.0px;top:380.6px;font-size:7px;color:#141014;letter-spacing:0.1px;-webkit-text-stroke:0.12px #201820">vu_1</div>

<div class="r" style="left:801.2px;top:396.7px;width:4.3px;height:11.4px;background:linear-gradient(#9a1a10 0,#9a1a10 16%,#c8a020 16%,#c8a020 28%,#0a5a0a 28%,#0a5a0a 45%,#30b030 45%,#30b030 60%,#0a6a0a 60%);border:0.6px solid #2a2a2a;box-sizing:border-box"></div>
<div class="o" style="left:513px;top:410px;width:117px;height:9px"></div><div class="t" style="left:514.0px;top:410.2px;font-size:7px;color:#1a1418;-webkit-text-stroke:0.12px #201820;">hat</div><div class="r" style="left:530.0px;top:414.2px;width:94.0px;height:1.3px;background:repeating-linear-gradient(90deg,#3a3440 0 2.5px,transparent 2.5px 4px)"></div>
<div class="o" style="left:591px;top:430px;width:59px;height:29px"></div>
<div class="hd" style="left:592px;top:431px;width:57px"></div>
<div class="t" style="left:599.5px;top:431.0px;font-size:7px;color:#1c1418;letter-spacing:0.2px;-webkit-text-stroke:0.15px #1c1418">noise/uniform</div>
<div class="t" style="left:592.0px;top:439.4px;font-size:7px;color:#141014;letter-spacing:0.1px;-webkit-text-stroke:0.12px #201820">noise.uniform_1</div>
<div class="t" style="left:634.6px;top:445.8px;font-size:8.5px;color:#111;-webkit-text-stroke:0.12px #201820;">&#177;</div>

<div class="o" style="left:513px;top:459px;width:68px;height:58px"></div>
<div class="hd" style="left:514px;top:460px;width:66px"></div>
<div class="t" style="left:521.1px;top:459.9px;font-size:7px;color:#1c1418;letter-spacing:0.2px;-webkit-text-stroke:0.15px #1c1418">math/*c</div>
<div class="t" style="left:513.6px;top:468.3px;font-size:7px;color:#141014;letter-spacing:0.1px;-webkit-text-stroke:0.12px #201820">*c_1</div>


<div class="t" style="left:515.6px;top:494.3px;font-size:7px;color:#141014;-webkit-text-stroke:0.12px #201820;">x0.969</div>
<div class="t" style="left:538.0px;width:40px;text-align:center;top:502.6px;font-size:7px;color:#0c0c0c;letter-spacing:0.75px;-webkit-text-stroke:0.12px #111">62.00</div>
<div class="o" style="left:581px;top:459px;width:69px;height:68px"></div>
<div class="hd" style="left:582px;top:460px;width:67px"></div>
<div class="t" style="left:589.7px;top:459.9px;font-size:7px;color:#1c1418;letter-spacing:0.2px;-webkit-text-stroke:0.15px #1c1418">env/d m</div>
<div class="t" style="left:582.2px;top:468.3px;font-size:7px;color:#141014;letter-spacing:0.1px;-webkit-text-stroke:0.12px #201820">env.decay.m_1</div>

<div class="t" style="left:600.0px;top:477.5px;font-size:7px;color:#141014;-webkit-text-stroke:0.12px #201820;">dm</div>


<div class="t" style="left:598.0px;top:487.2px;font-size:7px;color:#141014;-webkit-text-stroke:0.12px #201820;">trig</div>
<div class="t" style="left:634.0px;top:480.7px;font-size:9.5px;color:#000;-webkit-text-stroke:0.12px #201820;">+</div>

<div class="t" style="left:583.3px;top:505.0px;font-size:7px;color:#141014;-webkit-text-stroke:0.12px #201820;">72.8 ms</div>
<div class="t" style="left:606.6px;width:40px;text-align:center;top:512.4px;font-size:7px;color:#0c0c0c;letter-spacing:0.75px;-webkit-text-stroke:0.12px #111">13.00</div>
<div class="o" style="left:650px;top:459px;width:49px;height:39px"></div>
<div class="hd" style="left:651px;top:460px;width:47px"></div>
<div class="t" style="left:658.3px;top:459.9px;font-size:7px;color:#1c1418;letter-spacing:0.2px;-webkit-text-stroke:0.15px #1c1418">gain/vca</div>
<div class="t" style="left:650.8px;top:468.3px;font-size:7px;color:#141014;letter-spacing:0.1px;-webkit-text-stroke:0.12px #201820">gain.vca~_1</div>

<div class="t" style="left:668.7px;top:477.5px;font-size:7px;color:#141014;-webkit-text-stroke:0.12px #201820;">v</div>

<div class="t" style="left:668.7px;top:487.2px;font-size:7px;color:#141014;-webkit-text-stroke:0.12px #201820;">a</div>

<div class="o" style="left:699px;top:459px;width:68px;height:77px"></div>
<div class="hd" style="left:700px;top:460px;width:66px"></div>
<div class="t" style="left:707.1px;top:459.9px;font-size:7px;color:#1c1418;letter-spacing:0.2px;-webkit-text-stroke:0.15px #1c1418">filter/bp svf</div>
<div class="t" style="left:699.6px;top:468.3px;font-size:7px;color:#141014;letter-spacing:0.1px;-webkit-text-stroke:0.12px #201820">filter.bpfsvf~_1</div>


<div class="t" style="left:700.7px;top:491.5px;font-size:7px;color:#141014;-webkit-text-stroke:0.12px #201820;">pitch</div>
<div class="t" style="left:700.7px;top:498.7px;font-size:7px;color:#141014;-webkit-text-stroke:0.12px #201820;">3.520 kHz</div>
<div class="t" style="left:724.1px;width:40px;text-align:center;top:503.6px;font-size:7px;color:#0c0c0c;letter-spacing:0.75px;-webkit-text-stroke:0.12px #111">41.00</div>
<div class="t" style="left:700.7px;top:516.0px;font-size:7px;color:#141014;-webkit-text-stroke:0.12px #201820;">reso</div>
<div class="t" style="left:700.7px;top:523.9px;font-size:7px;color:#141014;-webkit-text-stroke:0.12px #201820;">Q=0.5</div>
<div class="t" style="left:724.1px;width:40px;text-align:center;top:528.2px;font-size:7px;color:#0c0c0c;letter-spacing:0.75px;-webkit-text-stroke:0.12px #111">0.00</div>
<div class="o" style="left:767px;top:459px;width:69px;height:107px"></div>
<div class="hd" style="left:768px;top:460px;width:67px"></div>
<div class="t" style="left:775.5px;top:459.9px;font-size:7px;color:#1c1418;letter-spacing:0.2px;-webkit-text-stroke:0.15px #1c1418">flanger</div>
<div class="t" style="left:768.0px;top:468.3px;font-size:7px;color:#141014;letter-spacing:0.1px;-webkit-text-stroke:0.12px #201820">flanger_1</div>


<div class="t" style="left:764.0px;width:40px;text-align:right;top:494.8px;font-size:7px;color:#141014;-webkit-text-stroke:0.12px #201820;">depth</div>
<div class="t" style="left:792.8px;width:40px;text-align:center;top:503.0px;font-size:7px;color:#0c0c0c;letter-spacing:0.75px;-webkit-text-stroke:0.12px #111">8.50</div>
<div class="t" style="left:764.0px;width:40px;text-align:right;top:520.0px;font-size:7px;color:#141014;-webkit-text-stroke:0.12px #201820;">fdbk</div>
<div class="t" style="left:792.8px;width:40px;text-align:center;top:527.6px;font-size:7px;color:#0c0c0c;letter-spacing:0.75px;-webkit-text-stroke:0.12px #111">40.00</div>
<div class="t" style="left:769.4px;top:541.5px;font-size:7px;color:#141014;-webkit-text-stroke:0.12px #201820;">speed</div>
<div class="t" style="left:769.4px;top:548.8px;font-size:7px;color:#141014;-webkit-text-stroke:0.12px #201820;">0.36 Hz</div>
<div class="t" style="left:792.8px;width:40px;text-align:center;top:553.6px;font-size:7px;color:#0c0c0c;letter-spacing:0.75px;-webkit-text-stroke:0.12px #111">-46.0</div>
<div class="o" style="left:836px;top:459px;width:39px;height:39px"></div>
<div class="hd" style="left:837px;top:460px;width:37px"></div>
<div class="t" style="left:844.1px;top:459.9px;font-size:7px;color:#1c1418;letter-spacing:0.2px;-webkit-text-stroke:0.15px #1c1418">disp/vu</div>
<div class="t" style="left:836.6px;top:468.3px;font-size:7px;color:#141014;letter-spacing:0.1px;-webkit-text-stroke:0.12px #201820">vu_2</div>

<div class="r" style="left:869.6px;top:484.4px;width:4.4px;height:11.4px;background:linear-gradient(#9a1a10 0,#9a1a10 16%,#c8a020 16%,#c8a020 28%,#0a5a0a 28%,#0a5a0a 45%,#30b030 45%,#30b030 60%,#0a6a0a 60%);border:0.6px solid #2a2a2a;box-sizing:border-box"></div>
<div class="o" style="left:53px;top:488px;width:137px;height:10px"></div><div class="t" style="left:53.7px;top:488.9px;font-size:7px;color:#1a1418;-webkit-text-stroke:0.12px #201820;">bass synth</div><div class="r" style="left:88.5px;top:492.9px;width:98.0px;height:1.3px;background:repeating-linear-gradient(90deg,#3a3440 0 2.5px,transparent 2.5px 4px)"></div>
<div class="o" style="left:53px;top:507px;width:68px;height:59px"></div>
<div class="hd" style="left:54px;top:508px;width:66px"></div>
<div class="t" style="left:61.6px;top:508.6px;font-size:7px;color:#1c1418;letter-spacing:0.2px;-webkit-text-stroke:0.15px #1c1418">env/d</div>
<div class="t" style="left:54.1px;top:517.0px;font-size:7px;color:#141014;letter-spacing:0.1px;-webkit-text-stroke:0.12px #201820">envd1</div>


<div class="t" style="left:107.0px;top:524.5px;font-size:9.5px;color:#000;-webkit-text-stroke:0.12px #201820;">+</div>

<div class="t" style="left:55.0px;top:543.8px;font-size:7px;color:#141014;-webkit-text-stroke:0.12px #201820;">145.5 ms</div>
<div class="t" style="left:79.1px;width:40px;text-align:center;top:552.1px;font-size:7px;color:#0c0c0c;letter-spacing:0.75px;-webkit-text-stroke:0.12px #111">7.00</div>
<div class="o" style="left:121px;top:507px;width:69px;height:79px"></div>
<div class="hd" style="left:122px;top:508px;width:67px"></div>
<div class="t" style="left:129.6px;top:508.6px;font-size:7px;color:#1c1418;letter-spacing:0.2px;-webkit-text-stroke:0.15px #1c1418">env/ahd lin x</div>
<div class="t" style="left:122.1px;top:517.0px;font-size:7px;color:#141014;letter-spacing:0.1px;-webkit-text-stroke:0.12px #201820">envahdlinx1</div>


<div class="t" style="left:175.0px;top:524.5px;font-size:9.5px;color:#000;-webkit-text-stroke:0.12px #201820;">+</div>

<div class="t" style="left:123.5px;top:540.0px;font-size:7px;color:#141014;-webkit-text-stroke:0.12px #201820;">a</div>
<div class="t" style="left:123.5px;top:547.5px;font-size:7px;color:#141014;-webkit-text-stroke:0.12px #201820;">7.64 ms</div>
<div class="t" style="left:146.7px;width:40px;text-align:center;top:551.6px;font-size:7px;color:#0c0c0c;letter-spacing:0.75px;-webkit-text-stroke:0.12px #111">-44.0</div>
<div class="t" style="left:123.5px;top:565.0px;font-size:7px;color:#141014;-webkit-text-stroke:0.12px #201820;">d</div>
<div class="t" style="left:123.5px;top:572.5px;font-size:7px;color:#141014;-webkit-text-stroke:0.12px #201820;">145.5 ms</div>
<div class="t" style="left:146.7px;width:40px;text-align:center;top:576.7px;font-size:7px;color:#0c0c0c;letter-spacing:0.75px;-webkit-text-stroke:0.12px #111">7.00</div>
<div class="o" style="left:34px;top:567px;width:48px;height:39px"></div>
<div class="hd" style="left:35px;top:568px;width:46px"></div>
<div class="t" style="left:42.2px;top:568.2px;font-size:7px;color:#1c1418;letter-spacing:0.2px;-webkit-text-stroke:0.15px #1c1418">math/+</div>
<div class="t" style="left:34.7px;top:576.6px;font-size:7px;color:#141014;letter-spacing:0.1px;-webkit-text-stroke:0.12px #201820">+_1</div>

<div class="t" style="left:51.9px;top:585.0px;font-size:7px;color:#141014;-webkit-text-stroke:0.12px #201820;">in1</div>

<div class="t" style="left:51.9px;top:594.6px;font-size:7px;color:#141014;-webkit-text-stroke:0.12px #201820;">in2</div>

<div class="o" style="left:219px;top:507px;width:59px;height:97px"></div>
<div class="hd" style="left:220px;top:508px;width:57px"></div>
<div class="t" style="left:227.7px;top:508.4px;font-size:7px;color:#1c1418;letter-spacing:0.2px;-webkit-text-stroke:0.15px #1c1418">mix/mix 2</div>
<div class="t" style="left:220.2px;top:516.8px;font-size:7px;color:#141014;letter-spacing:0.1px;-webkit-text-stroke:0.12px #201820">mix22</div>

<div class="t" style="left:237.6px;top:526.1px;font-size:7px;color:#141014;-webkit-text-stroke:0.12px #201820;">bus_in</div>

<div class="t" style="left:237.6px;top:536.0px;font-size:7px;color:#141014;-webkit-text-stroke:0.12px #201820;">in1</div>

<div class="t" style="left:237.6px;top:545.8px;font-size:7px;color:#141014;-webkit-text-stroke:0.12px #201820;">in2</div>

<div class="t" style="left:216.0px;width:30px;text-align:right;top:563.5px;font-size:7px;color:#141014;-webkit-text-stroke:0.12px #201820;">gain1</div>
<div class="t" style="left:235.1px;width:40px;text-align:center;top:571.8px;font-size:7px;color:#0c0c0c;letter-spacing:0.75px;-webkit-text-stroke:0.12px #111">63.50</div>
<div class="t" style="left:216.0px;width:30px;text-align:right;top:588.5px;font-size:7px;color:#141014;-webkit-text-stroke:0.12px #201820;">gain2</div>
<div class="t" style="left:235.1px;width:40px;text-align:center;top:597.0px;font-size:7px;color:#0c0c0c;letter-spacing:0.75px;-webkit-text-stroke:0.12px #111">63.50</div>
<div class="o" style="left:278px;top:507px;width:49px;height:79px"></div>
<div class="hd" style="left:279px;top:508px;width:47px"></div>
<div class="t" style="left:286.4px;top:508.4px;font-size:7px;color:#1c1418;letter-spacing:0.2px;-webkit-text-stroke:0.15px #1c1418">disp/chart p</div>
<div class="t" style="left:278.9px;top:516.8px;font-size:7px;color:#141014;letter-spacing:0.1px;-webkit-text-stroke:0.12px #201820">chart_2</div>

<div class="t" style="left:286.5px;top:524.5px;font-size:9.5px;color:#000;-webkit-text-stroke:0.12px #201820;">+</div>
<div class="r" style="left:280.1px;top:534.5px;width:46.1px;height:45.4px;background:#fff;border-top:1px solid #111;border-left:1px solid #111;box-sizing:border-box"></div>
<div class="o" style="left:347px;top:508px;width:68px;height:77px"></div>
<div class="hd" style="left:348px;top:509px;width:66px"></div>
<div class="t" style="left:355.5px;top:509.5px;font-size:7px;color:#1c1418;letter-spacing:0.2px;-webkit-text-stroke:0.15px #1c1418">env/ahd lin x</div>
<div class="t" style="left:348.0px;top:517.9px;font-size:7px;color:#141014;letter-spacing:0.1px;-webkit-text-stroke:0.12px #201820">envahdlinx1_</div>


<div class="t" style="left:400.0px;top:524.3px;font-size:9.5px;color:#000;-webkit-text-stroke:0.12px #201820;">+</div>

<div class="t" style="left:349.0px;top:540.0px;font-size:7px;color:#141014;-webkit-text-stroke:0.12px #201820;">a</div>
<div class="t" style="left:349.0px;top:547.7px;font-size:7px;color:#141014;-webkit-text-stroke:0.12px #201820;">22.91 ms</div>
<div class="t" style="left:372.2px;width:40px;text-align:center;top:551.5px;font-size:7px;color:#0c0c0c;letter-spacing:0.75px;-webkit-text-stroke:0.12px #111">-25.0</div>
<div class="t" style="left:349.0px;top:565.1px;font-size:7px;color:#141014;-webkit-text-stroke:0.12px #201820;">d</div>
<div class="t" style="left:349.0px;top:572.8px;font-size:7px;color:#141014;-webkit-text-stroke:0.12px #201820;">137.3 ms</div>
<div class="t" style="left:372.2px;width:40px;text-align:center;top:576.6px;font-size:7px;color:#0c0c0c;letter-spacing:0.75px;-webkit-text-stroke:0.12px #111">6.00</div>
<div class="o" style="left:425px;top:508px;width:58px;height:96px"></div>
<div class="hd" style="left:426px;top:509px;width:56px"></div>
<div class="t" style="left:433.5px;top:509.5px;font-size:7px;color:#1c1418;letter-spacing:0.2px;-webkit-text-stroke:0.15px #1c1418">mix/mix 2</div>
<div class="t" style="left:426.0px;top:517.9px;font-size:7px;color:#141014;letter-spacing:0.1px;-webkit-text-stroke:0.12px #201820">mix21</div>

<div class="t" style="left:442.8px;top:525.9px;font-size:7px;color:#141014;-webkit-text-stroke:0.12px #201820;">bus_in</div>

<div class="t" style="left:442.8px;top:536.2px;font-size:7px;color:#141014;-webkit-text-stroke:0.12px #201820;">in1</div>

<div class="t" style="left:442.8px;top:545.7px;font-size:7px;color:#141014;-webkit-text-stroke:0.12px #201820;">in2</div>

<div class="t" style="left:421.5px;width:30px;text-align:right;top:563.5px;font-size:7px;color:#141014;-webkit-text-stroke:0.12px #201820;">gain1</div>
<div class="t" style="left:441.1px;width:40px;text-align:center;top:571.8px;font-size:7px;color:#0c0c0c;letter-spacing:0.75px;-webkit-text-stroke:0.12px #111">12.50</div>
<div class="r" style="left:471.8px;top:571.9px;width:6px;height:7.4px;background:#000"></div><div class="t" style="left:472.9px;top:572.5px;font-size:6.5px;color:#fff;font-weight:bold;-webkit-text-stroke:0.12px #201820;">P</div>
<div class="t" style="left:421.5px;width:30px;text-align:right;top:589.6px;font-size:7px;color:#141014;-webkit-text-stroke:0.12px #201820;">gain2</div>
<div class="t" style="left:441.1px;width:40px;text-align:center;top:597.9px;font-size:7px;color:#0c0c0c;letter-spacing:0.75px;-webkit-text-stroke:0.12px #111">0.00</div>
<div class="r" style="left:471.8px;top:597.0px;width:6px;height:7.4px;background:#000"></div><div class="t" style="left:472.9px;top:597.6px;font-size:6.5px;color:#fff;font-weight:bold;-webkit-text-stroke:0.12px #201820;">P</div>
<div class="o" style="left:484px;top:527px;width:48px;height:78px"></div>
<div class="hd" style="left:485px;top:528px;width:46px"></div>
<div class="t" style="left:492.7px;top:528.4px;font-size:7px;color:#1c1418;letter-spacing:0.2px;-webkit-text-stroke:0.15px #1c1418">disp/chart p</div>
<div class="t" style="left:485.2px;top:536.8px;font-size:7px;color:#141014;letter-spacing:0.1px;-webkit-text-stroke:0.12px #201820">chart_1</div>

<div class="t" style="left:492.0px;top:543.9px;font-size:9.5px;color:#000;-webkit-text-stroke:0.12px #201820;">+</div>
<div class="r" style="left:486.0px;top:554.0px;width:45.3px;height:46.6px;background:#fff;border-top:1px solid #111;border-left:1px solid #111;box-sizing:border-box"></div>
<div class="o" style="left:34px;top:607px;width:67px;height:57px"></div>
<div class="hd" style="left:35px;top:608px;width:65px"></div>
<div class="t" style="left:42.1px;top:607.9px;font-size:7px;color:#1c1418;letter-spacing:0.2px;-webkit-text-stroke:0.15px #1c1418">osc/square</div>
<div class="t" style="left:34.6px;top:616.3px;font-size:7px;color:#141014;letter-spacing:0.1px;-webkit-text-stroke:0.12px #201820">square_1</div>

<div class="t" style="left:42.5px;top:622.8px;font-size:8.5px;color:#111;-webkit-text-stroke:0.12px #201820;">&#177;</div>
<div class="t" style="left:86.5px;top:622.8px;font-size:8.5px;color:#111;-webkit-text-stroke:0.12px #201820;">&#177;</div>

<div class="t" style="left:35.3px;top:640.8px;font-size:7px;color:#141014;-webkit-text-stroke:0.12px #201820;">61.74 Hz</div>
<div class="t" style="left:59.7px;width:40px;text-align:center;top:649.3px;font-size:7px;color:#0c0c0c;letter-spacing:0.75px;-webkit-text-stroke:0.12px #111">-29.0</div>
<div class="r" style="left:90.4px;top:649.0px;width:6px;height:7.4px;background:#000"></div><div class="t" style="left:91.5px;top:649.6px;font-size:6.5px;color:#fff;font-weight:bold;-webkit-text-stroke:0.12px #201820;">P</div>
<div class="o" style="left:34px;top:665px;width:67px;height:57px"></div>
<div class="hd" style="left:35px;top:666px;width:65px"></div>
<div class="t" style="left:42.1px;top:665.8px;font-size:7px;color:#1c1418;letter-spacing:0.2px;-webkit-text-stroke:0.15px #1c1418">osc/saw</div>
<div class="t" style="left:34.6px;top:674.2px;font-size:7px;color:#141014;letter-spacing:0.1px;-webkit-text-stroke:0.12px #201820">square_2</div>

<div class="t" style="left:42.5px;top:680.7px;font-size:8.5px;color:#111;-webkit-text-stroke:0.12px #201820;">&#177;</div>
<div class="t" style="left:86.5px;top:680.7px;font-size:8.5px;color:#111;-webkit-text-stroke:0.12px #201820;">&#177;</div>

<div class="t" style="left:35.3px;top:700.0px;font-size:7px;color:#141014;-webkit-text-stroke:0.12px #201820;">30.87 Hz</div>
<div class="t" style="left:59.7px;width:40px;text-align:center;top:708.0px;font-size:7px;color:#0c0c0c;letter-spacing:0.75px;-webkit-text-stroke:0.12px #111">-41.0</div>
<div class="o" style="left:101px;top:607px;width:60px;height:96px"></div>
<div class="hd" style="left:102px;top:608px;width:58px"></div>
<div class="t" style="left:109.9px;top:607.9px;font-size:7px;color:#1c1418;letter-spacing:0.2px;-webkit-text-stroke:0.15px #1c1418">mix/mix 2</div>
<div class="t" style="left:102.4px;top:616.3px;font-size:7px;color:#141014;letter-spacing:0.1px;-webkit-text-stroke:0.12px #201820">mix_1</div>

<div class="t" style="left:120.6px;top:624.1px;font-size:7px;color:#141014;-webkit-text-stroke:0.12px #201820;">bus_in</div>

<div class="t" style="left:120.6px;top:633.6px;font-size:7px;color:#141014;-webkit-text-stroke:0.12px #201820;">in1</div>

<div class="t" style="left:120.6px;top:643.7px;font-size:7px;color:#141014;-webkit-text-stroke:0.12px #201820;">in2</div>

<div class="t" style="left:98.0px;width:30px;text-align:right;top:661.2px;font-size:7px;color:#141014;-webkit-text-stroke:0.12px #201820;">gain1</div>
<div class="t" style="left:118.0px;width:40px;text-align:center;top:669.7px;font-size:7px;color:#0c0c0c;letter-spacing:0.75px;-webkit-text-stroke:0.12px #111">32.00</div>
<div class="r" style="left:148.8px;top:669.5px;width:6px;height:7.4px;background:#000"></div><div class="t" style="left:149.9px;top:670.1px;font-size:6.5px;color:#fff;font-weight:bold;-webkit-text-stroke:0.12px #201820;">P</div>
<div class="t" style="left:98.0px;width:30px;text-align:right;top:686.4px;font-size:7px;color:#141014;-webkit-text-stroke:0.12px #201820;">gain2</div>
<div class="t" style="left:118.0px;width:40px;text-align:center;top:694.4px;font-size:7px;color:#0c0c0c;letter-spacing:0.75px;-webkit-text-stroke:0.12px #111">37.00</div>
<div class="r" style="left:148.8px;top:694.2px;width:6px;height:7.4px;background:#000"></div><div class="t" style="left:149.9px;top:694.8px;font-size:6.5px;color:#fff;font-weight:bold;-webkit-text-stroke:0.12px #201820;">P</div>
<div class="o" style="left:161px;top:607px;width:39px;height:36px"></div>
<div class="hd" style="left:162px;top:608px;width:37px"></div>
<div class="t" style="left:169.1px;top:607.9px;font-size:7px;color:#1c1418;letter-spacing:0.2px;-webkit-text-stroke:0.15px #1c1418">gain/vca</div>
<div class="t" style="left:161.6px;top:616.3px;font-size:7px;color:#141014;letter-spacing:0.1px;-webkit-text-stroke:0.12px #201820">vca_1</div>

<div class="t" style="left:179.8px;top:624.1px;font-size:7px;color:#141014;-webkit-text-stroke:0.12px #201820;">v</div>

<div class="t" style="left:179.8px;top:633.6px;font-size:7px;color:#141014;-webkit-text-stroke:0.12px #201820;">a</div>

<div class="o" style="left:200px;top:607px;width:38px;height:57px"></div>
<div class="hd" style="left:201px;top:608px;width:36px"></div>
<div class="t" style="left:208.2px;top:607.9px;font-size:7px;color:#1c1418;letter-spacing:0.2px;-webkit-text-stroke:0.15px #1c1418">math/+c</div>
<div class="t" style="left:200.7px;top:616.3px;font-size:7px;color:#141014;letter-spacing:0.1px;-webkit-text-stroke:0.12px #201820">bias</div>


<div class="t" style="left:195.6px;width:40px;text-align:center;top:649.8px;font-size:7px;color:#0c0c0c;letter-spacing:0.75px;-webkit-text-stroke:0.12px #111">0.00</div>
<div class="o" style="left:249px;top:606px;width:68px;height:96px"></div>
<div class="hd" style="left:250px;top:607px;width:66px"></div>
<div class="t" style="left:257.4px;top:607.1px;font-size:7px;color:#1c1418;letter-spacing:0.2px;-webkit-text-stroke:0.15px #1c1418">filter/lp m</div>
<div class="t" style="left:249.9px;top:615.5px;font-size:7px;color:#141014;letter-spacing:0.1px;-webkit-text-stroke:0.12px #201820">lpfm_1</div>

<div class="t" style="left:266.6px;top:624.0px;font-size:7px;color:#141014;-webkit-text-stroke:0.12px #201820;">in</div>

<div class="t" style="left:266.6px;top:633.8px;font-size:7px;color:#141014;-webkit-text-stroke:0.12px #201820;">pitchm</div>

<div class="t" style="left:266.6px;top:643.5px;font-size:7px;color:#141014;-webkit-text-stroke:0.12px #201820;">resom</div>

<div class="t" style="left:250.5px;top:657.7px;font-size:7px;color:#141014;-webkit-text-stroke:0.12px #201820;">pitch</div>
<div class="t" style="left:250.5px;top:665.1px;font-size:7px;color:#141014;-webkit-text-stroke:0.12px #201820;">554.4 Hz</div>
<div class="t" style="left:274.6px;width:40px;text-align:center;top:668.4px;font-size:7px;color:#0c0c0c;letter-spacing:0.75px;-webkit-text-stroke:0.12px #111">9.00</div>
<div class="r" style="left:305.5px;top:668.0px;width:6px;height:7.4px;background:#000"></div><div class="t" style="left:306.6px;top:668.6px;font-size:6.5px;color:#fff;font-weight:bold;-webkit-text-stroke:0.12px #201820;">P</div>
<div class="t" style="left:250.5px;top:682.8px;font-size:7px;color:#141014;-webkit-text-stroke:0.12px #201820;">reso</div>
<div class="t" style="left:250.5px;top:690.2px;font-size:7px;color:#141014;-webkit-text-stroke:0.12px #201820;">Q=8.0</div>
<div class="t" style="left:274.6px;width:40px;text-align:center;top:693.9px;font-size:7px;color:#0c0c0c;letter-spacing:0.75px;-webkit-text-stroke:0.12px #111">60.00</div>
<div class="r" style="left:305.5px;top:693.5px;width:6px;height:7.4px;background:#000"></div><div class="t" style="left:306.6px;top:694.1px;font-size:6.5px;color:#fff;font-weight:bold;-webkit-text-stroke:0.12px #201820;">P</div>
<div class="o" style="left:317px;top:606px;width:58px;height:29px"></div>
<div class="hd" style="left:318px;top:607px;width:56px"></div>
<div class="t" style="left:325.7px;top:607.1px;font-size:7px;color:#1c1418;letter-spacing:0.2px;-webkit-text-stroke:0.15px #1c1418">math/muls 16</div>
<div class="t" style="left:318.2px;top:615.5px;font-size:7px;color:#141014;letter-spacing:0.1px;-webkit-text-stroke:0.12px #201820">muls21</div>


<div class="o" style="left:375px;top:606px;width:40px;height:29px"></div>
<div class="hd" style="left:376px;top:607px;width:38px"></div>
<div class="t" style="left:383.9px;top:607.1px;font-size:7px;color:#1c1418;letter-spacing:0.2px;-webkit-text-stroke:0.15px #1c1418">dist/soft</div>
<div class="t" style="left:376.4px;top:615.5px;font-size:7px;color:#141014;letter-spacing:0.1px;-webkit-text-stroke:0.12px #201820">softsat1</div>

<div class="t" style="left:397.5px;top:622.8px;font-size:8.5px;color:#111;-webkit-text-stroke:0.12px #201820;">&#177;</div>

<div class="o" style="left:317px;top:635px;width:39px;height:29px"></div>
<div class="hd" style="left:318px;top:636px;width:37px"></div>
<div class="t" style="left:325.7px;top:636.5px;font-size:7px;color:#1c1418;letter-spacing:0.2px;-webkit-text-stroke:0.15px #1c1418">dist/inf</div>
<div class="t" style="left:318.2px;top:644.9px;font-size:7px;color:#141014;letter-spacing:0.1px;-webkit-text-stroke:0.12px #201820">inf_1</div>

<div class="t" style="left:338.5px;top:652.2px;font-size:8.5px;color:#111;-webkit-text-stroke:0.12px #201820;">&#177;</div>

<div class="o" style="left:317px;top:664px;width:98px;height:136px"></div>
<div class="hd" style="left:318px;top:665px;width:96px"></div>
<div class="t" style="left:325.7px;top:665.5px;font-size:7px;color:#1c1418;letter-spacing:0.2px;-webkit-text-stroke:0.15px #1c1418">disp/scope 128 b trig</div>
<div class="t" style="left:318.2px;top:673.9px;font-size:7px;color:#141014;letter-spacing:0.1px;-webkit-text-stroke:0.12px #201820">kscope_1</div>

<div class="t" style="left:326.0px;top:681.6px;font-size:8.5px;color:#111;-webkit-text-stroke:0.12px #201820;">&#177;</div>
<div class="t" style="left:335.6px;top:682.8px;font-size:7px;color:#141014;-webkit-text-stroke:0.12px #201820;">in</div>

<div class="t" style="left:335.6px;top:692.6px;font-size:7px;color:#141014;-webkit-text-stroke:0.12px #201820;">hold</div>
<div class="r" style="left:323.0px;top:700.0px;width:91.0px;height:92.0px;background:#fff;border-top:1px solid #111;border-left:1px solid #111;box-sizing:border-box"></div>
<div class="o" style="left:415px;top:606px;width:49px;height:38px"></div>
<div class="hd" style="left:416px;top:607px;width:47px"></div>
<div class="t" style="left:423.7px;top:607.4px;font-size:7px;color:#1c1418;letter-spacing:0.2px;-webkit-text-stroke:0.15px #1c1418">ctrl/toggle</div>
<div class="t" style="left:416.2px;top:615.8px;font-size:7px;color:#141014;letter-spacing:0.1px;-webkit-text-stroke:0.12px #201820">toggle_1</div>

<div class="r" style="left:453.3px;top:631.9px;width:9px;height:9.4px;background:#111;border:1px solid #9a9a9a;box-sizing:border-box"></div>
<div class="o" style="left:415px;top:644px;width:49px;height:49px"></div>
<div class="hd" style="left:416px;top:645px;width:47px"></div>
<div class="t" style="left:423.7px;top:645.3px;font-size:7px;color:#1c1418;letter-spacing:0.2px;-webkit-text-stroke:0.15px #1c1418">mux/mux 2</div>
<div class="t" style="left:416.2px;top:653.7px;font-size:7px;color:#141014;letter-spacing:0.1px;-webkit-text-stroke:0.12px #201820">mux_1</div>

<div class="t" style="left:433.7px;top:663.2px;font-size:7px;color:#141014;-webkit-text-stroke:0.12px #201820;">i1</div>

<div class="t" style="left:433.7px;top:672.8px;font-size:7px;color:#141014;-webkit-text-stroke:0.12px #201820;">i2</div>

<div class="t" style="left:433.7px;top:682.6px;font-size:7px;color:#141014;-webkit-text-stroke:0.12px #201820;">s</div>

<div class="o" style="left:464px;top:644px;width:68px;height:58px"></div>
<div class="hd" style="left:465px;top:645px;width:66px"></div>
<div class="t" style="left:472.1px;top:645.3px;font-size:7px;color:#1c1418;letter-spacing:0.2px;-webkit-text-stroke:0.15px #1c1418">math/*c</div>
<div class="t" style="left:464.6px;top:653.7px;font-size:7px;color:#141014;letter-spacing:0.1px;-webkit-text-stroke:0.12px #201820">*c1</div>


<div class="t" style="left:466.4px;top:680.7px;font-size:7px;color:#141014;-webkit-text-stroke:0.12px #201820;">x0.992</div>
<div class="t" style="left:489.5px;width:40px;text-align:center;top:688.7px;font-size:7px;color:#0c0c0c;letter-spacing:0.75px;-webkit-text-stroke:0.12px #111">63.50</div>
<div class="r" style="left:520.3px;top:688.4px;width:6px;height:7.4px;background:#000"></div><div class="t" style="left:521.4px;top:689.0px;font-size:6.5px;color:#fff;font-weight:bold;-webkit-text-stroke:0.12px #201820;">P</div>
<div class="o" style="left:552px;top:645px;width:78px;height:116px"></div>
<div class="hd" style="left:553px;top:646px;width:76px"></div>
<div class="t" style="left:561.0px;top:646.4px;font-size:7px;color:#1c1418;letter-spacing:0.2px;-webkit-text-stroke:0.15px #1c1418">delay/echo fdbk mix</div>
<div class="t" style="left:553.5px;top:654.8px;font-size:7px;color:#141014;letter-spacing:0.1px;-webkit-text-stroke:0.12px #201820">echo_1</div>

<div class="t" style="left:570.0px;top:663.0px;font-size:7px;color:#141014;-webkit-text-stroke:0.12px #201820;">in</div>

<div class="t" style="left:570.0px;top:673.1px;font-size:7px;color:#141014;-webkit-text-stroke:0.12px #201820;">mixm</div>

<div class="t" style="left:570.0px;top:683.1px;font-size:7px;color:#141014;-webkit-text-stroke:0.12px #201820;">feedbackm</div>

<div class="t" style="left:553.1px;top:692.8px;font-size:7px;color:#141014;-webkit-text-stroke:0.12px #201820;">delaylength</div>
<div class="r" style="left:589.8px;top:690.7px;width:34.1px;height:9.8px;background:#fff;border-top:1px solid #222;border-left:1px solid #222;box-sizing:border-box"></div><div class="t" style="left:586.8px;width:30px;text-align:center;top:692.9px;font-size:7.5px;color:#111;-webkit-text-stroke:0.12px #201820;">17000</div>
<div class="t" style="left:568.7px;width:30px;text-align:right;top:711.0px;font-size:7px;color:#141014;-webkit-text-stroke:0.12px #201820;">mix</div>
<div class="t" style="left:587.5px;width:40px;text-align:center;top:719.4px;font-size:7px;color:#0c0c0c;letter-spacing:0.75px;-webkit-text-stroke:0.12px #111">23.00</div>
<div class="r" style="left:618.3px;top:719.0px;width:6px;height:7.4px;background:#000"></div><div class="t" style="left:619.4px;top:719.6px;font-size:6.5px;color:#fff;font-weight:bold;-webkit-text-stroke:0.12px #201820;">P</div>
<div class="t" style="left:558.7px;width:40px;text-align:right;top:736.9px;font-size:7px;color:#141014;-webkit-text-stroke:0.12px #201820;">feedback</div>
<div class="t" style="left:587.5px;width:40px;text-align:center;top:744.3px;font-size:7px;color:#0c0c0c;letter-spacing:0.75px;-webkit-text-stroke:0.12px #111">17.50</div>
<div class="r" style="left:618.3px;top:744.0px;width:6px;height:7.4px;background:#000"></div><div class="t" style="left:619.4px;top:744.6px;font-size:6.5px;color:#fff;font-weight:bold;-webkit-text-stroke:0.12px #201820;">P</div>
<div class="o" style="left:455px;top:704px;width:96px;height:96px"></div>
<div class="hd" style="left:456px;top:705px;width:94px"></div>
<div class="t" style="left:463.1px;top:705.0px;font-size:7px;color:#1c1418;letter-spacing:0.2px;-webkit-text-stroke:0.15px #1c1418">disp/scope 128 b trig</div>
<div class="t" style="left:455.6px;top:713.4px;font-size:7px;color:#141014;letter-spacing:0.1px;-webkit-text-stroke:0.12px #201820">kscope_2</div>

<div class="t" style="left:463.0px;top:720.2px;font-size:8.5px;color:#111;-webkit-text-stroke:0.12px #201820;">&#177;</div>
<div class="t" style="left:472.8px;top:721.4px;font-size:7px;color:#141014;-webkit-text-stroke:0.12px #201820;">in</div>

<div class="t" style="left:472.8px;top:731.7px;font-size:7px;color:#141014;-webkit-text-stroke:0.12px #201820;">hold</div>
<div class="r" style="left:460.4px;top:739.4px;width:90.6px;height:52.6px;background:#fff;border-top:1px solid #111;border-left:1px solid #111;box-sizing:border-box"></div>
<div class="o" style="left:718px;top:644px;width:68px;height:137px"></div>
<div class="hd" style="left:719px;top:645px;width:66px"></div>
<div class="t" style="left:726.8px;top:645.7px;font-size:7px;color:#1c1418;letter-spacing:0.2px;-webkit-text-stroke:0.15px #1c1418">mix/mix 3 g</div>
<div class="t" style="left:719.3px;top:654.1px;font-size:7px;color:#141014;letter-spacing:0.1px;-webkit-text-stroke:0.12px #201820">mix_2</div>

<div class="t" style="left:736.8px;top:663.4px;font-size:7px;color:#141014;-webkit-text-stroke:0.12px #201820;">bus_in</div>

<div class="t" style="left:736.8px;top:673.3px;font-size:7px;color:#141014;-webkit-text-stroke:0.12px #201820;">in1</div>

<div class="t" style="left:736.8px;top:682.8px;font-size:7px;color:#141014;-webkit-text-stroke:0.12px #201820;">in2</div>

<div class="t" style="left:736.8px;top:692.7px;font-size:7px;color:#141014;-webkit-text-stroke:0.12px #201820;">in3</div>

<div class="t" style="left:720.0px;top:705.6px;font-size:7px;color:#141014;-webkit-text-stroke:0.12px #201820;">gain1</div>
<div class="t" style="left:720.0px;top:713.6px;font-size:7px;color:#141014;-webkit-text-stroke:0.12px #201820;">x0.992</div>
<div class="t" style="left:743.7px;width:40px;text-align:center;top:718.2px;font-size:7px;color:#0c0c0c;letter-spacing:0.75px;-webkit-text-stroke:0.12px #111">63.50</div>
<div class="t" style="left:720.0px;top:730.7px;font-size:7px;color:#141014;-webkit-text-stroke:0.12px #201820;">gain2</div>
<div class="t" style="left:720.0px;top:738.7px;font-size:7px;color:#141014;-webkit-text-stroke:0.12px #201820;">x0.992</div>
<div class="t" style="left:743.7px;width:40px;text-align:center;top:743.3px;font-size:7px;color:#0c0c0c;letter-spacing:0.75px;-webkit-text-stroke:0.12px #111">63.50</div>
<div class="t" style="left:720.0px;top:755.9px;font-size:7px;color:#141014;-webkit-text-stroke:0.12px #201820;">gain3</div>
<div class="t" style="left:720.0px;top:763.9px;font-size:7px;color:#141014;-webkit-text-stroke:0.12px #201820;">x0.289</div>
<div class="t" style="left:743.7px;width:40px;text-align:center;top:768.5px;font-size:7px;color:#0c0c0c;letter-spacing:0.75px;-webkit-text-stroke:0.12px #111">18.50</div>
<div class="o" style="left:786px;top:644px;width:69px;height:69px"></div>
<div class="hd" style="left:787px;top:645px;width:67px"></div>
<div class="t" style="left:795.0px;top:645.7px;font-size:7px;color:#1c1418;letter-spacing:0.2px;-webkit-text-stroke:0.15px #1c1418">audio/out stereo</div>
<div class="t" style="left:787.5px;top:654.1px;font-size:7px;color:#141014;letter-spacing:0.1px;-webkit-text-stroke:0.12px #201820">dac_1</div>

<div class="t" style="left:805.0px;top:663.4px;font-size:7px;color:#141014;-webkit-text-stroke:0.12px #201820;">left</div>

<div class="t" style="left:805.0px;top:673.3px;font-size:7px;color:#141014;-webkit-text-stroke:0.12px #201820;">right</div>
<div class="t" style="left:810.0px;width:40px;text-align:right;top:683.5px;font-size:7px;color:#141014;-webkit-text-stroke:0.12px #201820;">vuLeft</div>
<div class="r" style="left:850.2px;top:681.3px;width:4.5px;height:11.7px;background:linear-gradient(#9a1a10 0,#9a1a10 16%,#c8a020 16%,#c8a020 28%,#0a5a0a 28%,#0a5a0a 45%,#30b030 45%,#30b030 60%,#0a6a0a 60%);border:0.6px solid #2a2a2a;box-sizing:border-box"></div>
<div class="t" style="left:810.0px;width:40px;text-align:right;top:694.8px;font-size:7px;color:#141014;-webkit-text-stroke:0.12px #201820;">vuRight</div>
<div class="r" style="left:850.2px;top:693.0px;width:4.5px;height:9.8px;background:linear-gradient(#9a1a10 0,#9a1a10 16%,#c8a020 16%,#c8a020 28%,#0a5a0a 28%,#0a5a0a 45%,#30b030 45%,#30b030 60%,#0a6a0a 60%);border:0.6px solid #2a2a2a;box-sizing:border-box"></div>
<div class="o" style="left:336px;top:331px;width:60px;height:59px"></div>
<div class="hd" style="left:337px;top:332px;width:58px"></div>
<div class="t" style="left:344.6px;top:332.6px;font-size:7px;color:#1c1418;letter-spacing:0.2px;-webkit-text-stroke:0.15px #1c1418">math/smooth</div>
<div class="t" style="left:337.1px;top:341.0px;font-size:7px;color:#141014;letter-spacing:0.1px;-webkit-text-stroke:0.12px #201820">smooth1</div>


<div class="t" style="left:352.5px;width:40px;text-align:center;top:375.5px;font-size:7px;color:#0c0c0c;letter-spacing:0.75px;-webkit-text-stroke:0.12px #111">16.00</div>
<div class="o" style="left:415px;top:331px;width:49px;height:49px"></div>
<div class="hd" style="left:416px;top:332px;width:47px"></div>
<div class="t" style="left:423.9px;top:332.6px;font-size:7px;color:#1c1418;letter-spacing:0.2px;-webkit-text-stroke:0.15px #1c1418">mux/mux 2</div>
<div class="t" style="left:416.4px;top:341.0px;font-size:7px;color:#141014;letter-spacing:0.1px;-webkit-text-stroke:0.12px #201820">inmux21</div>

<div class="t" style="left:433.7px;top:350.0px;font-size:7px;color:#141014;-webkit-text-stroke:0.12px #201820;">i1</div>

<div class="t" style="left:433.7px;top:359.6px;font-size:7px;color:#141014;-webkit-text-stroke:0.12px #201820;">i2</div>

<div class="t" style="left:433.7px;top:369.8px;font-size:7px;color:#141014;-webkit-text-stroke:0.12px #201820;">s</div>

<svg class="s" style="left:0;top:0;clip-path:inset(77px 30px 44px 14px)" width="918" height="836">
<path d="M16.0 80.0h5.2l-2.6 4.4z" fill="#111"/>
<circle cx="18.8" cy="99.5" r="3.0" fill="#00006a"/><circle cx="18.8" cy="99.5" r="2.25" fill="#0000f0"/><circle cx="18.8" cy="99.5" r="1.2" fill="#f4f4ec"/>
<circle cx="18.8" cy="109.1" r="3.0" fill="#6a6a00"/><circle cx="18.8" cy="109.1" r="2.25" fill="#f0f000"/><circle cx="18.8" cy="109.1" r="1.2" fill="#f4f4ec"/>
<path d="M24.5 112.5h3v-6.0h3" fill="none" stroke="#333" stroke-width="1" shape-rendering="crispEdges"/>
<rect x="74.8" y="101.5" width="5.4" height="5.4" fill="#f0f000" stroke="#6a6a00" stroke-width="0.7"/>
<circle cx="59.0" cy="122.4" r="7.2" fill="#fff" stroke="#222" stroke-width="1"/><line x1="54.5" y1="128.0" x2="50.0" y2="131.2" stroke="#444" stroke-width="0.9"/><line x1="63.5" y1="128.0" x2="68.0" y2="131.2" stroke="#444" stroke-width="0.9"/><line x1="59.0" y1="122.4" x2="59.0" y2="116.0" stroke="#333" stroke-width="1.1"/>
<path d="M94.0 80.0h5.2l-2.6 4.4z" fill="#111"/>
<circle cx="96.8" cy="98.9" r="2.6" fill="#f0f000" stroke="#6a6a00" stroke-width="0.6"/>
<path d="M101.5 102.5h3v-7.0h3" fill="none" stroke="#333" stroke-width="1" shape-rendering="crispEdges"/>
<circle cx="96.8" cy="109.0" r="3.0" fill="#6a6a00"/><circle cx="96.8" cy="109.0" r="2.25" fill="#f0f000"/><circle cx="96.8" cy="109.0" r="1.2" fill="#f4f4ec"/>
<path d="M101.5 112.5h3v-6.0h3" fill="none" stroke="#333" stroke-width="1" shape-rendering="crispEdges"/>
<rect x="142.3" y="96.3" width="5.4" height="5.4" fill="#00d800" stroke="#005a00" stroke-width="0.7"/>
<rect x="142.3" y="106.3" width="5.4" height="5.4" fill="#f0f000" stroke="#6a6a00" stroke-width="0.7"/>
<path d="M137.5 106.1v5.5M135.0 111.6h5" fill="none" stroke="#1a1a1a" stroke-width="0.85"/>
<path d="M142.2 118.2l2 -2.6l2 2.6z M142.2 119.8l2 2.6l2 -2.6z" fill="#222"/>
<path d="M16.0 168.3h5.2l-2.6 4.4z" fill="#111"/>
<circle cx="18.3" cy="187.4" r="2.6" fill="#f0f000" stroke="#6a6a00" stroke-width="0.6"/>
<path d="M22.5 190.5h3v-6.0h3" fill="none" stroke="#333" stroke-width="1" shape-rendering="crispEdges"/>
<circle cx="18.3" cy="197.1" r="3.0" fill="#6a6a00"/><circle cx="18.3" cy="197.1" r="2.25" fill="#f0f000"/><circle cx="18.3" cy="197.1" r="1.2" fill="#f4f4ec"/>
<path d="M22.5 200.5h3v-6.0h3" fill="none" stroke="#333" stroke-width="1" shape-rendering="crispEdges"/>
<rect x="64.3" y="184.7" width="5.4" height="5.4" fill="#00d800" stroke="#005a00" stroke-width="0.7"/>
<rect x="64.3" y="194.4" width="5.4" height="5.4" fill="#f0f000" stroke="#6a6a00" stroke-width="0.7"/>
<path d="M59.5 194.2v5.5M57.0 199.7h5" fill="none" stroke="#1a1a1a" stroke-width="0.85"/>
<path d="M64.0 206.4l2 -2.6l2 2.6z M64.0 208.0l2 2.6l2 -2.6z" fill="#222"/>
<path d="M84.4 177.7h5.2l-2.6 4.4z" fill="#111"/>
<rect x="113.9" y="194.1" width="5.4" height="5.4" fill="#00d800" stroke="#005a00" stroke-width="0.7"/>
<path d="M113.0 206.4l2 -2.6l2 2.6z M113.0 208.0l2 2.6l2 -2.6z" fill="#222"/>
<path d="M45.3 226.8h5.2l-2.6 4.4z" fill="#111"/>
<circle cx="48.0" cy="246.2" r="2.6" fill="#00d800" stroke="#005a00" stroke-width="0.6"/>
<circle cx="48.0" cy="255.4" r="2.6" fill="#00d800" stroke="#005a00" stroke-width="0.6"/>
<rect x="83.9" y="248.1" width="5.4" height="5.4" fill="#00d800" stroke="#005a00" stroke-width="0.7"/>
<path d="M202.0 80.3h5.2l-2.6 4.4z" fill="#111"/>
<circle cx="204.6" cy="98.9" r="2.6" fill="#00d800" stroke="#005a00" stroke-width="0.6"/>
<rect x="328.5" y="96.2" width="5.4" height="5.4" fill="#00d800" stroke="#005a00" stroke-width="0.7"/>
<path d="M202.0 119.2h5.2l-2.6 4.4z" fill="#111"/>
<circle cx="204.5" cy="138.0" r="2.6" fill="#00d800" stroke="#005a00" stroke-width="0.6"/>
<rect x="328.9" y="135.3" width="5.4" height="5.4" fill="#00d800" stroke="#005a00" stroke-width="0.7"/>
<circle cx="204.5" cy="148.0" r="3.0" fill="#6a6a00"/><circle cx="204.5" cy="148.0" r="2.25" fill="#f0f000"/><circle cx="204.5" cy="148.0" r="1.2" fill="#f4f4ec"/>
<rect x="328.9" y="145.3" width="5.4" height="5.4" fill="#f0f000" stroke="#6a6a00" stroke-width="0.7"/>
<circle cx="204.5" cy="157.8" r="3.0" fill="#6a6a00"/><circle cx="204.5" cy="157.8" r="2.25" fill="#f0f000"/><circle cx="204.5" cy="157.8" r="1.2" fill="#f4f4ec"/>
<rect x="328.9" y="155.1" width="5.4" height="5.4" fill="#f0f000" stroke="#6a6a00" stroke-width="0.7"/>
<circle cx="204.5" cy="167.5" r="3.0" fill="#6a6a00"/><circle cx="204.5" cy="167.5" r="2.25" fill="#f0f000"/><circle cx="204.5" cy="167.5" r="1.2" fill="#f4f4ec"/>
<rect x="328.9" y="164.8" width="5.4" height="5.4" fill="#f0f000" stroke="#6a6a00" stroke-width="0.7"/>
<circle cx="204.5" cy="177.3" r="3.0" fill="#6a6a00"/><circle cx="204.5" cy="177.3" r="2.25" fill="#f0f000"/><circle cx="204.5" cy="177.3" r="1.2" fill="#f4f4ec"/>
<rect x="328.9" y="174.6" width="5.4" height="5.4" fill="#f0f000" stroke="#6a6a00" stroke-width="0.7"/>
<path d="M202.0 227.8h5.2l-2.6 4.4z" fill="#111"/>
<circle cx="204.5" cy="246.0" r="2.6" fill="#00d800" stroke="#005a00" stroke-width="0.6"/>
<rect x="328.9" y="243.3" width="5.4" height="5.4" fill="#00d800" stroke="#005a00" stroke-width="0.7"/>
<circle cx="204.5" cy="255.8" r="3.0" fill="#6a6a00"/><circle cx="204.5" cy="255.8" r="2.25" fill="#f0f000"/><circle cx="204.5" cy="255.8" r="1.2" fill="#f4f4ec"/>
<rect x="328.9" y="253.1" width="5.4" height="5.4" fill="#f0f000" stroke="#6a6a00" stroke-width="0.7"/>
<circle cx="204.5" cy="265.6" r="3.0" fill="#6a6a00"/><circle cx="204.5" cy="265.6" r="2.25" fill="#f0f000"/><circle cx="204.5" cy="265.6" r="1.2" fill="#f4f4ec"/>
<rect x="328.9" y="262.9" width="5.4" height="5.4" fill="#f0f000" stroke="#6a6a00" stroke-width="0.7"/>
<circle cx="204.5" cy="275.4" r="3.0" fill="#6a6a00"/><circle cx="204.5" cy="275.4" r="2.25" fill="#f0f000"/><circle cx="204.5" cy="275.4" r="1.2" fill="#f4f4ec"/>
<rect x="328.9" y="272.7" width="5.4" height="5.4" fill="#f0f000" stroke="#6a6a00" stroke-width="0.7"/>
<circle cx="204.5" cy="285.2" r="3.0" fill="#6a6a00"/><circle cx="204.5" cy="285.2" r="2.25" fill="#f0f000"/><circle cx="204.5" cy="285.2" r="1.2" fill="#f4f4ec"/>
<rect x="328.9" y="282.5" width="5.4" height="5.4" fill="#f0f000" stroke="#6a6a00" stroke-width="0.7"/>
<path d="M16.0 266.0h5.2l-2.6 4.4z" fill="#111"/>
<circle cx="18.8" cy="284.8" r="2.6" fill="#00d800" stroke="#005a00" stroke-width="0.6"/>
<rect x="142.6" y="282.1" width="5.4" height="5.4" fill="#00d800" stroke="#005a00" stroke-width="0.7"/>
<path d="M16.0 306.0h5.2l-2.6 4.4z" fill="#111"/>
<circle cx="18.8" cy="324.3" r="2.6" fill="#00d800" stroke="#005a00" stroke-width="0.6"/>
<rect x="142.8" y="321.6" width="5.4" height="5.4" fill="#00d800" stroke="#005a00" stroke-width="0.7"/>
<circle cx="18.8" cy="334.0" r="3.0" fill="#00006a"/><circle cx="18.8" cy="334.0" r="2.25" fill="#0000f0"/><circle cx="18.8" cy="334.0" r="1.2" fill="#f4f4ec"/>
<rect x="142.8" y="331.3" width="5.4" height="5.4" fill="#0000f0" stroke="#00006a" stroke-width="0.7"/>
<path d="M202.0 335.0h5.2l-2.6 4.4z" fill="#111"/>
<circle cx="204.5" cy="353.8" r="2.6" fill="#00d800" stroke="#005a00" stroke-width="0.6"/>
<rect x="328.9" y="351.1" width="5.4" height="5.4" fill="#00d800" stroke="#005a00" stroke-width="0.7"/>
<circle cx="204.5" cy="363.4" r="3.0" fill="#00006a"/><circle cx="204.5" cy="363.4" r="2.25" fill="#0000f0"/><circle cx="204.5" cy="363.4" r="1.2" fill="#f4f4ec"/>
<rect x="328.9" y="360.7" width="5.4" height="5.4" fill="#0000f0" stroke="#00006a" stroke-width="0.7"/>
<path d="M358.0 139.0h5.2l-2.6 4.4z" fill="#111"/>
<rect x="397.6" y="155.6" width="5.4" height="5.4" fill="#f0f000" stroke="#6a6a00" stroke-width="0.7"/>
<path d="M358.0 178.3h5.2l-2.6 4.4z" fill="#111"/>
<circle cx="361.0" cy="196.7" r="3.0" fill="#6a6a00"/><circle cx="361.0" cy="196.7" r="2.25" fill="#f0f000"/><circle cx="361.0" cy="196.7" r="1.2" fill="#f4f4ec"/>
<circle cx="361.0" cy="206.8" r="2.6" fill="#f0f000" stroke="#6a6a00" stroke-width="0.6"/>
<circle cx="361.0" cy="216.6" r="2.6" fill="#f0f000" stroke="#6a6a00" stroke-width="0.6"/>
<rect x="397.0" y="204.1" width="5.4" height="5.4" fill="#f0f000" stroke="#6a6a00" stroke-width="0.7"/>
<path d="M407.0 178.3h5.2l-2.6 4.4z" fill="#111"/>
<circle cx="410.0" cy="196.7" r="2.6" fill="#f0f000" stroke="#6a6a00" stroke-width="0.6"/>
<path d="M414.5 200.5h3v-7.0h3" fill="none" stroke="#333" stroke-width="1" shape-rendering="crispEdges"/>
<circle cx="410.0" cy="206.8" r="3.0" fill="#6a6a00"/><circle cx="410.0" cy="206.8" r="2.25" fill="#f0f000"/><circle cx="410.0" cy="206.8" r="1.2" fill="#f4f4ec"/>
<path d="M414.5 210.5h3v-7.0h3" fill="none" stroke="#333" stroke-width="1" shape-rendering="crispEdges"/>
<rect x="455.3" y="194.0" width="5.4" height="5.4" fill="#00d800" stroke="#005a00" stroke-width="0.7"/>
<rect x="455.3" y="204.1" width="5.4" height="5.4" fill="#f0f000" stroke="#6a6a00" stroke-width="0.7"/>
<path d="M450.5 203.9v5.5M448.0 209.4h5" fill="none" stroke="#1a1a1a" stroke-width="0.85"/>
<path d="M455.0 216.8l2 -2.6l2 2.6z M455.0 218.4l2 2.6l2 -2.6z" fill="#222"/>
<path d="M466.0 178.3h5.2l-2.6 4.4z" fill="#111"/>
<circle cx="468.6" cy="196.7" r="2.6" fill="#00d800" stroke="#005a00" stroke-width="0.6"/>
<rect x="495.5" y="194.0" width="5.4" height="5.4" fill="#00d800" stroke="#005a00" stroke-width="0.7"/>
<path d="M504.0 178.3h5.2l-2.6 4.4z" fill="#111"/>
<circle cx="507.8" cy="196.7" r="2.6" fill="#00d800" stroke="#005a00" stroke-width="0.6"/>
<circle cx="507.8" cy="206.8" r="2.6" fill="#f0f000" stroke="#6a6a00" stroke-width="0.6"/>
<path d="M512.5 210.5h3v-7.0h3" fill="none" stroke="#333" stroke-width="1" shape-rendering="crispEdges"/>
<path d="M476.0 208.0h5.2l-2.6 4.4z" fill="#111"/>
<circle cx="478.6" cy="226.4" r="2.6" fill="#00d800" stroke="#005a00" stroke-width="0.6"/>
<path d="M515.0 266.0h5.2l-2.6 4.4z" fill="#111"/>
<circle cx="517.1" cy="284.8" r="2.6" fill="#f0f000" stroke="#6a6a00" stroke-width="0.6"/>
<path d="M521.5 288.5h3v-7.0h3" fill="none" stroke="#333" stroke-width="1" shape-rendering="crispEdges"/>
<rect x="573.4" y="282.1" width="5.4" height="5.4" fill="#0000f0" stroke="#00006a" stroke-width="0.7"/>
<circle cx="557.8" cy="298.3" r="7.2" fill="#fff" stroke="#222" stroke-width="1"/><line x1="553.3" y1="303.9" x2="548.8" y2="307.1" stroke="#444" stroke-width="0.9"/><line x1="562.3" y1="303.9" x2="566.8" y2="307.1" stroke="#444" stroke-width="0.9"/><line x1="557.8" y1="298.3" x2="552.3" y2="295.1" stroke="#333" stroke-width="1.1"/>
<path d="M593.0 266.0h5.2l-2.6 4.4z" fill="#111"/>
<rect x="642.3" y="282.1" width="5.4" height="5.4" fill="#f00000" stroke="#6a0000" stroke-width="0.7"/>
<path d="M661.5 266.0h5.2l-2.6 4.4z" fill="#111"/>
<circle cx="664.6" cy="284.8" r="2.6" fill="#f00000" stroke="#6a0000" stroke-width="0.6"/>
<rect x="710.1" y="282.1" width="5.4" height="5.4" fill="#f00000" stroke="#6a0000" stroke-width="0.7"/>
<path d="M719.8 266.0h5.2l-2.6 4.4z" fill="#111"/>
<circle cx="722.7" cy="284.8" r="2.6" fill="#f00000" stroke="#6a0000" stroke-width="0.6"/>
<rect x="779.0" y="282.1" width="5.4" height="5.4" fill="#f00000" stroke="#6a0000" stroke-width="0.7"/>
<circle cx="763.4" cy="299.0" r="7.2" fill="#fff" stroke="#222" stroke-width="1"/><line x1="758.9" y1="304.6" x2="754.4" y2="307.8" stroke="#444" stroke-width="0.9"/><line x1="767.9" y1="304.6" x2="772.4" y2="307.8" stroke="#444" stroke-width="0.9"/><line x1="763.4" y1="299.0" x2="761.2" y2="293.0" stroke="#333" stroke-width="1.1"/>
<path d="M515.0 325.3h5.2l-2.6 4.4z" fill="#111"/>
<circle cx="517.1" cy="343.8" r="2.6" fill="#f0f000" stroke="#6a6a00" stroke-width="0.6"/>
<path d="M521.5 347.5h3v-7.0h3" fill="none" stroke="#333" stroke-width="1" shape-rendering="crispEdges"/>
<circle cx="517.1" cy="353.6" r="3.0" fill="#00006a"/><circle cx="517.1" cy="353.6" r="2.25" fill="#0000f0"/><circle cx="517.1" cy="353.6" r="1.2" fill="#f4f4ec"/>
<rect x="572.7" y="345.9" width="5.4" height="5.4" fill="#0000f0" stroke="#00006a" stroke-width="0.7"/>
<circle cx="557.8" cy="367.0" r="7.2" fill="#fff" stroke="#222" stroke-width="1"/><line x1="553.3" y1="372.6" x2="548.8" y2="375.8" stroke="#444" stroke-width="0.9"/><line x1="562.3" y1="372.6" x2="566.8" y2="375.8" stroke="#444" stroke-width="0.9"/><line x1="557.8" y1="367.0" x2="559.5" y2="360.8" stroke="#333" stroke-width="1.1"/>
<path d="M583.0 325.3h5.2l-2.6 4.4z" fill="#111"/>
<circle cx="585.9" cy="343.8" r="2.6" fill="#0000f0" stroke="#00006a" stroke-width="0.6"/>
<rect x="642.3" y="341.1" width="5.4" height="5.4" fill="#0000f0" stroke="#00006a" stroke-width="0.7"/>
<circle cx="626.4" cy="357.6" r="7.2" fill="#fff" stroke="#222" stroke-width="1"/><line x1="621.9" y1="363.2" x2="617.4" y2="366.4" stroke="#444" stroke-width="0.9"/><line x1="630.9" y1="363.2" x2="635.4" y2="366.4" stroke="#444" stroke-width="0.9"/><line x1="626.4" y1="357.6" x2="624.7" y2="351.4" stroke="#333" stroke-width="1.1"/>
<path d="M651.5 325.3h5.2l-2.6 4.4z" fill="#111"/>
<circle cx="654.5" cy="343.8" r="2.6" fill="#0000f0" stroke="#00006a" stroke-width="0.6"/>
<circle cx="654.5" cy="353.6" r="3.0" fill="#6a0000"/><circle cx="654.5" cy="353.6" r="2.25" fill="#f00000"/><circle cx="654.5" cy="353.6" r="1.2" fill="#f4f4ec"/>
<circle cx="654.5" cy="363.4" r="3.0" fill="#6a0000"/><circle cx="654.5" cy="363.4" r="2.25" fill="#f00000"/><circle cx="654.5" cy="363.4" r="1.2" fill="#f4f4ec"/>
<rect x="710.9" y="350.9" width="5.4" height="5.4" fill="#f00000" stroke="#6a0000" stroke-width="0.7"/>
<circle cx="694.7" cy="377.0" r="7.2" fill="#fff" stroke="#222" stroke-width="1"/><line x1="690.2" y1="382.6" x2="685.7" y2="385.8" stroke="#444" stroke-width="0.9"/><line x1="699.2" y1="382.6" x2="703.7" y2="385.8" stroke="#444" stroke-width="0.9"/><line x1="694.7" y1="377.0" x2="689.2" y2="373.8" stroke="#333" stroke-width="1.1"/>
<path d="M719.8 325.3h5.2l-2.6 4.4z" fill="#111"/>
<circle cx="722.7" cy="343.8" r="2.6" fill="#f00000" stroke="#6a0000" stroke-width="0.6"/>
<circle cx="722.7" cy="353.6" r="2.6" fill="#f00000" stroke="#6a0000" stroke-width="0.6"/>
<rect x="758.9" y="345.9" width="5.4" height="5.4" fill="#f00000" stroke="#6a0000" stroke-width="0.7"/>
<path d="M719.8 374.0h5.2l-2.6 4.4z" fill="#111"/>
<circle cx="722.7" cy="392.8" r="2.6" fill="#f00000" stroke="#6a0000" stroke-width="0.6"/>
<circle cx="722.7" cy="402.6" r="2.6" fill="#0000f0" stroke="#00006a" stroke-width="0.6"/>
<rect x="758.9" y="394.8" width="5.4" height="5.4" fill="#f00000" stroke="#6a0000" stroke-width="0.7"/>
<path d="M769.0 374.0h5.2l-2.6 4.4z" fill="#111"/>
<circle cx="771.7" cy="392.8" r="2.6" fill="#f00000" stroke="#6a0000" stroke-width="0.6"/>
<path d="M593.0 432.8h5.2l-2.6 4.4z" fill="#111"/>
<rect x="642.2" y="447.8" width="5.4" height="5.4" fill="#f00000" stroke="#6a0000" stroke-width="0.7"/>
<path d="M514.6 461.7h5.2l-2.6 4.4z" fill="#111"/>
<circle cx="517.7" cy="481.0" r="2.6" fill="#0000f0" stroke="#00006a" stroke-width="0.6"/>
<rect x="573.6" y="478.3" width="5.4" height="5.4" fill="#0000f0" stroke="#00006a" stroke-width="0.7"/>
<circle cx="557.4" cy="494.0" r="7.2" fill="#fff" stroke="#222" stroke-width="1"/><line x1="552.9" y1="499.6" x2="548.4" y2="502.8" stroke="#444" stroke-width="0.9"/><line x1="561.9" y1="499.6" x2="566.4" y2="502.8" stroke="#444" stroke-width="0.9"/><line x1="557.4" y1="494.0" x2="562.9" y2="490.8" stroke="#333" stroke-width="1.1"/>
<path d="M583.2 461.7h5.2l-2.6 4.4z" fill="#111"/>
<circle cx="585.7" cy="481.0" r="2.6" fill="#0000f0" stroke="#00006a" stroke-width="0.6"/>
<circle cx="585.7" cy="490.7" r="2.6" fill="#f0f000" stroke="#6a6a00" stroke-width="0.6"/>
<path d="M590.5 494.5h3v-7.0h3" fill="none" stroke="#333" stroke-width="1" shape-rendering="crispEdges"/>
<rect x="641.0" y="482.8" width="5.4" height="5.4" fill="#0000f0" stroke="#00006a" stroke-width="0.7"/>
<circle cx="626.0" cy="503.8" r="7.2" fill="#fff" stroke="#222" stroke-width="1"/><line x1="621.5" y1="509.4" x2="617.0" y2="512.6" stroke="#444" stroke-width="0.9"/><line x1="630.5" y1="509.4" x2="635.0" y2="512.6" stroke="#444" stroke-width="0.9"/><line x1="626.0" y1="503.8" x2="619.7" y2="502.7" stroke="#333" stroke-width="1.1"/>
<path d="M651.8 461.7h5.2l-2.6 4.4z" fill="#111"/>
<circle cx="654.3" cy="481.0" r="2.6" fill="#0000f0" stroke="#00006a" stroke-width="0.6"/>
<circle cx="654.3" cy="490.7" r="2.6" fill="#f00000" stroke="#6a0000" stroke-width="0.6"/>
<rect x="690.3" y="482.8" width="5.4" height="5.4" fill="#f00000" stroke="#6a0000" stroke-width="0.7"/>
<path d="M700.6 461.7h5.2l-2.6 4.4z" fill="#111"/>
<circle cx="703.3" cy="480.7" r="2.6" fill="#f00000" stroke="#6a0000" stroke-width="0.6"/>
<rect x="759.7" y="478.0" width="5.4" height="5.4" fill="#f00000" stroke="#6a0000" stroke-width="0.7"/>
<circle cx="743.5" cy="495.0" r="7.2" fill="#fff" stroke="#222" stroke-width="1"/><line x1="739.0" y1="500.6" x2="734.5" y2="503.8" stroke="#444" stroke-width="0.9"/><line x1="748.0" y1="500.6" x2="752.5" y2="503.8" stroke="#444" stroke-width="0.9"/><line x1="743.5" y1="495.0" x2="749.9" y2="495.0" stroke="#333" stroke-width="1.1"/>
<circle cx="743.5" cy="519.6" r="7.2" fill="#fff" stroke="#222" stroke-width="1"/><line x1="739.0" y1="525.2" x2="734.5" y2="528.4" stroke="#444" stroke-width="0.9"/><line x1="748.0" y1="525.2" x2="752.5" y2="528.4" stroke="#444" stroke-width="0.9"/><line x1="743.5" y1="519.6" x2="738.6" y2="523.7" stroke="#333" stroke-width="1.1"/>
<path d="M769.0 461.7h5.2l-2.6 4.4z" fill="#111"/>
<circle cx="771.5" cy="480.7" r="2.6" fill="#f00000" stroke="#6a0000" stroke-width="0.6"/>
<rect x="827.7" y="478.0" width="5.4" height="5.4" fill="#f00000" stroke="#6a0000" stroke-width="0.7"/>
<circle cx="812.2" cy="494.4" r="7.2" fill="#fff" stroke="#222" stroke-width="1"/><line x1="807.7" y1="500.0" x2="803.2" y2="503.2" stroke="#444" stroke-width="0.9"/><line x1="816.7" y1="500.0" x2="821.2" y2="503.2" stroke="#444" stroke-width="0.9"/><line x1="812.2" y1="494.4" x2="805.9" y2="495.5" stroke="#333" stroke-width="1.1"/>
<circle cx="812.2" cy="519.0" r="7.2" fill="#fff" stroke="#222" stroke-width="1"/><line x1="807.7" y1="524.6" x2="803.2" y2="527.8" stroke="#444" stroke-width="0.9"/><line x1="816.7" y1="524.6" x2="821.2" y2="527.8" stroke="#444" stroke-width="0.9"/><line x1="812.2" y1="519.0" x2="816.3" y2="514.1" stroke="#333" stroke-width="1.1"/>
<circle cx="812.2" cy="545.0" r="7.2" fill="#fff" stroke="#222" stroke-width="1"/><line x1="807.7" y1="550.6" x2="803.2" y2="553.8" stroke="#444" stroke-width="0.9"/><line x1="816.7" y1="550.6" x2="821.2" y2="553.8" stroke="#444" stroke-width="0.9"/><line x1="812.2" y1="545.0" x2="805.8" y2="545.6" stroke="#333" stroke-width="1.1"/>
<path d="M837.6 461.7h5.2l-2.6 4.4z" fill="#111"/>
<circle cx="840.7" cy="480.7" r="2.6" fill="#f00000" stroke="#6a0000" stroke-width="0.6"/>
<path d="M55.1 510.4h5.2l-2.6 4.4z" fill="#111"/>
<circle cx="57.8" cy="529.6" r="2.6" fill="#f0f000" stroke="#6a6a00" stroke-width="0.6"/>
<path d="M62.5 533.5h3v-7.0h3" fill="none" stroke="#333" stroke-width="1" shape-rendering="crispEdges"/>
<rect x="113.4" y="526.9" width="5.4" height="5.4" fill="#0000f0" stroke="#00006a" stroke-width="0.7"/>
<circle cx="98.5" cy="543.5" r="7.2" fill="#fff" stroke="#222" stroke-width="1"/><line x1="94.0" y1="549.1" x2="89.5" y2="552.3" stroke="#444" stroke-width="0.9"/><line x1="103.0" y1="549.1" x2="107.5" y2="552.3" stroke="#444" stroke-width="0.9"/><line x1="98.5" y1="543.5" x2="100.2" y2="537.3" stroke="#333" stroke-width="1.1"/>
<path d="M123.1 510.4h5.2l-2.6 4.4z" fill="#111"/>
<circle cx="125.9" cy="529.6" r="2.6" fill="#f0f000" stroke="#6a6a00" stroke-width="0.6"/>
<path d="M130.5 533.5h3v-7.0h3" fill="none" stroke="#333" stroke-width="1" shape-rendering="crispEdges"/>
<rect x="182.5" y="526.9" width="5.4" height="5.4" fill="#0000f0" stroke="#00006a" stroke-width="0.7"/>
<circle cx="166.1" cy="543.0" r="7.2" fill="#fff" stroke="#222" stroke-width="1"/><line x1="161.6" y1="548.6" x2="157.1" y2="551.8" stroke="#444" stroke-width="0.9"/><line x1="170.6" y1="548.6" x2="175.1" y2="551.8" stroke="#444" stroke-width="0.9"/><line x1="166.1" y1="543.0" x2="159.7" y2="543.0" stroke="#333" stroke-width="1.1"/>
<circle cx="166.1" cy="568.1" r="7.2" fill="#fff" stroke="#222" stroke-width="1"/><line x1="161.6" y1="573.7" x2="157.1" y2="576.9" stroke="#444" stroke-width="0.9"/><line x1="170.6" y1="573.7" x2="175.1" y2="576.9" stroke="#444" stroke-width="0.9"/><line x1="166.1" y1="568.1" x2="167.8" y2="561.9" stroke="#333" stroke-width="1.1"/>
<path d="M35.7 570.0h5.2l-2.6 4.4z" fill="#111"/>
<circle cx="38.3" cy="588.5" r="2.6" fill="#0000f0" stroke="#00006a" stroke-width="0.6"/>
<circle cx="38.3" cy="598.1" r="2.6" fill="#0000f0" stroke="#00006a" stroke-width="0.6"/>
<rect x="74.0" y="590.4" width="5.4" height="5.4" fill="#0000f0" stroke="#00006a" stroke-width="0.7"/>
<path d="M221.2 510.2h5.2l-2.6 4.4z" fill="#111"/>
<circle cx="224.2" cy="529.6" r="3.0" fill="#00006a"/><circle cx="224.2" cy="529.6" r="2.25" fill="#0000f0"/><circle cx="224.2" cy="529.6" r="1.2" fill="#f4f4ec"/>
<circle cx="224.2" cy="539.5" r="2.6" fill="#0000f0" stroke="#00006a" stroke-width="0.6"/>
<circle cx="224.2" cy="549.3" r="2.6" fill="#0000f0" stroke="#00006a" stroke-width="0.6"/>
<rect x="270.2" y="536.8" width="5.4" height="5.4" fill="#0000f0" stroke="#00006a" stroke-width="0.7"/>
<circle cx="254.5" cy="563.2" r="7.2" fill="#fff" stroke="#222" stroke-width="1"/><line x1="250.0" y1="568.8" x2="245.5" y2="572.0" stroke="#444" stroke-width="0.9"/><line x1="259.0" y1="568.8" x2="263.5" y2="572.0" stroke="#444" stroke-width="0.9"/><line x1="254.5" y1="563.2" x2="259.0" y2="567.7" stroke="#333" stroke-width="1.1"/>
<circle cx="254.5" cy="588.4" r="7.2" fill="#fff" stroke="#222" stroke-width="1"/><line x1="250.0" y1="594.0" x2="245.5" y2="597.2" stroke="#444" stroke-width="0.9"/><line x1="259.0" y1="594.0" x2="263.5" y2="597.2" stroke="#444" stroke-width="0.9"/><line x1="254.5" y1="588.4" x2="259.0" y2="592.9" stroke="#333" stroke-width="1.1"/>
<path d="M279.9 510.2h5.2l-2.6 4.4z" fill="#111"/>
<circle cx="282.8" cy="529.6" r="2.6" fill="#0000f0" stroke="#00006a" stroke-width="0.6"/>
<g transform="translate(280.1,534.5)"><path d="M0.5 1 L1 1 L1.6 16 L2.5 1 L14 1 L15 28 L16 1 L29 1 L30.5 30 L32 1 L44 1 L45 12 L45.5 1" fill="none" stroke="#888" stroke-width="0.9"/></g>
<path d="M349.0 511.3h5.2l-2.6 4.4z" fill="#111"/>
<circle cx="350.9" cy="529.4" r="2.6" fill="#f0f000" stroke="#6a6a00" stroke-width="0.6"/>
<path d="M355.5 532.5h3v-6.0h3" fill="none" stroke="#333" stroke-width="1" shape-rendering="crispEdges"/>
<rect x="407.0" y="526.7" width="5.4" height="5.4" fill="#0000f0" stroke="#00006a" stroke-width="0.7"/>
<circle cx="391.6" cy="542.9" r="7.2" fill="#fff" stroke="#222" stroke-width="1"/><line x1="387.1" y1="548.5" x2="382.6" y2="551.7" stroke="#444" stroke-width="0.9"/><line x1="396.1" y1="548.5" x2="400.6" y2="551.7" stroke="#444" stroke-width="0.9"/><line x1="391.6" y1="542.9" x2="386.1" y2="539.7" stroke="#333" stroke-width="1.1"/>
<circle cx="391.6" cy="568.0" r="7.2" fill="#fff" stroke="#222" stroke-width="1"/><line x1="387.1" y1="573.6" x2="382.6" y2="576.8" stroke="#444" stroke-width="0.9"/><line x1="396.1" y1="573.6" x2="400.6" y2="576.8" stroke="#444" stroke-width="0.9"/><line x1="391.6" y1="568.0" x2="392.7" y2="561.7" stroke="#333" stroke-width="1.1"/>
<path d="M427.0 511.3h5.2l-2.6 4.4z" fill="#111"/>
<circle cx="429.3" cy="529.4" r="3.0" fill="#00006a"/><circle cx="429.3" cy="529.4" r="2.25" fill="#0000f0"/><circle cx="429.3" cy="529.4" r="1.2" fill="#f4f4ec"/>
<circle cx="429.3" cy="539.7" r="2.6" fill="#0000f0" stroke="#00006a" stroke-width="0.6"/>
<circle cx="429.3" cy="549.2" r="2.6" fill="#0000f0" stroke="#00006a" stroke-width="0.6"/>
<rect x="475.2" y="537.0" width="5.4" height="5.4" fill="#0000f0" stroke="#00006a" stroke-width="0.7"/>
<circle cx="460.5" cy="563.2" r="7.2" fill="#fff" stroke="#222" stroke-width="1"/><line x1="456.0" y1="568.8" x2="451.5" y2="572.0" stroke="#444" stroke-width="0.9"/><line x1="465.0" y1="568.8" x2="469.5" y2="572.0" stroke="#444" stroke-width="0.9"/><line x1="460.5" y1="563.2" x2="454.1" y2="563.2" stroke="#333" stroke-width="1.1"/>
<path d="M478.8 574.4h3l-1.5 2z" fill="#222"/>
<circle cx="460.5" cy="589.3" r="7.2" fill="#fff" stroke="#222" stroke-width="1"/><line x1="456.0" y1="594.9" x2="451.5" y2="598.1" stroke="#444" stroke-width="0.9"/><line x1="465.0" y1="594.9" x2="469.5" y2="598.1" stroke="#444" stroke-width="0.9"/><line x1="460.5" y1="589.3" x2="456.0" y2="593.8" stroke="#333" stroke-width="1.1"/>
<path d="M478.8 599.5h3l-1.5 2z" fill="#222"/>
<path d="M486.2 530.2h5.2l-2.6 4.4z" fill="#111"/>
<circle cx="488.1" cy="549.0" r="2.6" fill="#0000f0" stroke="#00006a" stroke-width="0.6"/>
<g transform="translate(486.0,554.0)"><path d="M0.5 44 L1 36 L2 36 L4 36 L7 44.6 L12 44.6 L15 36 L18 36 L21 44.6 L25 44.6 L28 36 L30 36 L33 44.6 L35 44.6 L38 36 L40 36 L43 44.6 L45 44" fill="none" stroke="#888" stroke-width="0.9"/></g>
<path d="M35.6 609.7h5.2l-2.6 4.4z" fill="#111"/>
<circle cx="38.4" cy="627.6" r="2.6" fill="#0000f0" stroke="#00006a" stroke-width="0.6"/>
<rect x="94.4" y="624.9" width="5.4" height="5.4" fill="#f00000" stroke="#6a0000" stroke-width="0.7"/>
<circle cx="79.1" cy="640.7" r="7.2" fill="#fff" stroke="#222" stroke-width="1"/><line x1="74.6" y1="646.3" x2="70.1" y2="649.5" stroke="#444" stroke-width="0.9"/><line x1="83.6" y1="646.3" x2="88.1" y2="649.5" stroke="#444" stroke-width="0.9"/><line x1="79.1" y1="640.7" x2="73.6" y2="637.5" stroke="#333" stroke-width="1.1"/>
<path d="M97.4 651.5h3l-1.5 2z" fill="#222"/>
<path d="M35.6 667.6h5.2l-2.6 4.4z" fill="#111"/>
<circle cx="38.4" cy="685.5" r="2.6" fill="#0000f0" stroke="#00006a" stroke-width="0.6"/>
<rect x="94.4" y="682.8" width="5.4" height="5.4" fill="#f00000" stroke="#6a0000" stroke-width="0.7"/>
<circle cx="79.1" cy="699.4" r="7.2" fill="#fff" stroke="#222" stroke-width="1"/><line x1="74.6" y1="705.0" x2="70.1" y2="708.2" stroke="#444" stroke-width="0.9"/><line x1="83.6" y1="705.0" x2="88.1" y2="708.2" stroke="#444" stroke-width="0.9"/><line x1="79.1" y1="699.4" x2="72.7" y2="699.4" stroke="#333" stroke-width="1.1"/>
<path d="M103.4 609.7h5.2l-2.6 4.4z" fill="#111"/>
<circle cx="106.7" cy="627.6" r="3.0" fill="#6a0000"/><circle cx="106.7" cy="627.6" r="2.25" fill="#f00000"/><circle cx="106.7" cy="627.6" r="1.2" fill="#f4f4ec"/>
<circle cx="106.7" cy="637.1" r="2.6" fill="#f00000" stroke="#6a0000" stroke-width="0.6"/>
<circle cx="106.7" cy="647.2" r="2.6" fill="#f00000" stroke="#6a0000" stroke-width="0.6"/>
<rect x="152.4" y="634.4" width="5.4" height="5.4" fill="#f00000" stroke="#6a0000" stroke-width="0.7"/>
<circle cx="137.4" cy="661.1" r="7.2" fill="#fff" stroke="#222" stroke-width="1"/><line x1="132.9" y1="666.7" x2="128.4" y2="669.9" stroke="#444" stroke-width="0.9"/><line x1="141.9" y1="666.7" x2="146.4" y2="669.9" stroke="#444" stroke-width="0.9"/><line x1="137.4" y1="661.1" x2="137.4" y2="654.7" stroke="#333" stroke-width="1.1"/>
<path d="M155.8 672.0h3l-1.5 2z" fill="#222"/>
<circle cx="137.4" cy="685.8" r="7.2" fill="#fff" stroke="#222" stroke-width="1"/><line x1="132.9" y1="691.4" x2="128.4" y2="694.6" stroke="#444" stroke-width="0.9"/><line x1="141.9" y1="691.4" x2="146.4" y2="694.6" stroke="#444" stroke-width="0.9"/><line x1="137.4" y1="685.8" x2="140.6" y2="680.3" stroke="#333" stroke-width="1.1"/>
<path d="M155.8 696.7h3l-1.5 2z" fill="#222"/>
<path d="M162.6 609.7h5.2l-2.6 4.4z" fill="#111"/>
<circle cx="165.4" cy="627.6" r="2.6" fill="#0000f0" stroke="#00006a" stroke-width="0.6"/>
<circle cx="165.4" cy="637.1" r="2.6" fill="#f00000" stroke="#6a0000" stroke-width="0.6"/>
<rect x="191.5" y="629.2" width="5.4" height="5.4" fill="#f00000" stroke="#6a0000" stroke-width="0.7"/>
<path d="M201.7 609.7h5.2l-2.6 4.4z" fill="#111"/>
<circle cx="204.5" cy="627.6" r="2.6" fill="#f00000" stroke="#6a0000" stroke-width="0.6"/>
<rect x="231.0" y="624.9" width="5.4" height="5.4" fill="#f00000" stroke="#6a0000" stroke-width="0.7"/>
<circle cx="215.0" cy="641.2" r="7.2" fill="#fff" stroke="#222" stroke-width="1"/><line x1="210.5" y1="646.8" x2="206.0" y2="650.0" stroke="#444" stroke-width="0.9"/><line x1="219.5" y1="646.8" x2="224.0" y2="650.0" stroke="#444" stroke-width="0.9"/><line x1="215.0" y1="641.2" x2="210.5" y2="645.7" stroke="#333" stroke-width="1.1"/>
<path d="M250.9 608.9h5.2l-2.6 4.4z" fill="#111"/>
<circle cx="253.2" cy="627.5" r="2.6" fill="#f00000" stroke="#6a0000" stroke-width="0.6"/>
<circle cx="253.2" cy="637.3" r="2.6" fill="#0000f0" stroke="#00006a" stroke-width="0.6"/>
<circle cx="253.2" cy="647.0" r="3.0" fill="#00006a"/><circle cx="253.2" cy="647.0" r="2.25" fill="#0000f0"/><circle cx="253.2" cy="647.0" r="1.2" fill="#f4f4ec"/>
<rect x="309.4" y="634.6" width="5.4" height="5.4" fill="#f00000" stroke="#6a0000" stroke-width="0.7"/>
<circle cx="294.0" cy="659.8" r="7.2" fill="#fff" stroke="#222" stroke-width="1"/><line x1="289.5" y1="665.4" x2="285.0" y2="668.6" stroke="#444" stroke-width="0.9"/><line x1="298.5" y1="665.4" x2="303.0" y2="668.6" stroke="#444" stroke-width="0.9"/><line x1="294.0" y1="659.8" x2="296.2" y2="653.8" stroke="#333" stroke-width="1.1"/>
<path d="M312.5 670.5h3l-1.5 2z" fill="#222"/>
<circle cx="294.0" cy="685.3" r="7.2" fill="#fff" stroke="#222" stroke-width="1"/><line x1="289.5" y1="690.9" x2="285.0" y2="694.1" stroke="#444" stroke-width="0.9"/><line x1="298.5" y1="690.9" x2="303.0" y2="694.1" stroke="#444" stroke-width="0.9"/><line x1="294.0" y1="685.3" x2="299.5" y2="688.5" stroke="#333" stroke-width="1.1"/>
<path d="M312.5 696.0h3l-1.5 2z" fill="#222"/>
<path d="M319.2 608.9h5.2l-2.6 4.4z" fill="#111"/>
<circle cx="321.9" cy="627.5" r="2.6" fill="#f00000" stroke="#6a0000" stroke-width="0.6"/>
<rect x="367.4" y="624.8" width="5.4" height="5.4" fill="#f00000" stroke="#6a0000" stroke-width="0.7"/>
<path d="M377.4 608.9h5.2l-2.6 4.4z" fill="#111"/>
<circle cx="380.3" cy="627.5" r="2.6" fill="#f00000" stroke="#6a0000" stroke-width="0.6"/>
<rect x="407.4" y="624.8" width="5.4" height="5.4" fill="#f00000" stroke="#6a0000" stroke-width="0.7"/>
<path d="M319.2 638.3h5.2l-2.6 4.4z" fill="#111"/>
<circle cx="321.9" cy="656.9" r="2.6" fill="#f00000" stroke="#6a0000" stroke-width="0.6"/>
<rect x="348.2" y="654.2" width="5.4" height="5.4" fill="#f00000" stroke="#6a0000" stroke-width="0.7"/>
<path d="M319.2 667.3h5.2l-2.6 4.4z" fill="#111"/>
<circle cx="321.9" cy="686.3" r="2.6" fill="#f00000" stroke="#6a0000" stroke-width="0.6"/>
<circle cx="321.9" cy="696.1" r="3.0" fill="#6a6a00"/><circle cx="321.9" cy="696.1" r="2.25" fill="#f0f000"/><circle cx="321.9" cy="696.1" r="1.2" fill="#f4f4ec"/>
<g transform="translate(323.0,700.0)"><path d="M0 45 L10 44.5 L20 45.2 L30 44 L40 44.8 L50 44.2 L60 45 L70 44.3 L80 44.6 L91 44.5" fill="none" stroke="#444" stroke-width="0.9"/></g>
<path d="M417.2 609.2h5.2l-2.6 4.4z" fill="#111"/>
<rect x="456.0" y="624.8" width="5.4" height="5.4" fill="#f0f000" stroke="#6a6a00" stroke-width="0.7"/>
<path d="M417.2 647.1h5.2l-2.6 4.4z" fill="#111"/>
<circle cx="419.8" cy="666.7" r="2.6" fill="#f00000" stroke="#6a0000" stroke-width="0.6"/>
<circle cx="419.8" cy="676.3" r="2.6" fill="#f00000" stroke="#6a0000" stroke-width="0.6"/>
<circle cx="419.8" cy="686.1" r="2.6" fill="#f0f000" stroke="#6a6a00" stroke-width="0.6"/>
<rect x="455.5" y="673.6" width="5.4" height="5.4" fill="#f00000" stroke="#6a0000" stroke-width="0.7"/>
<path d="M465.6 647.1h5.2l-2.6 4.4z" fill="#111"/>
<circle cx="468.5" cy="666.7" r="2.6" fill="#f00000" stroke="#6a0000" stroke-width="0.6"/>
<rect x="524.6" y="664.0" width="5.4" height="5.4" fill="#f00000" stroke="#6a0000" stroke-width="0.7"/>
<circle cx="508.9" cy="680.1" r="7.2" fill="#fff" stroke="#222" stroke-width="1"/><line x1="504.4" y1="685.7" x2="499.9" y2="688.9" stroke="#444" stroke-width="0.9"/><line x1="513.4" y1="685.7" x2="517.9" y2="688.9" stroke="#444" stroke-width="0.9"/><line x1="508.9" y1="680.1" x2="513.4" y2="684.6" stroke="#333" stroke-width="1.1"/>
<path d="M527.3 690.9h3l-1.5 2z" fill="#222"/>
<path d="M554.5 648.2h5.2l-2.6 4.4z" fill="#111"/>
<circle cx="556.6" cy="666.5" r="2.6" fill="#f00000" stroke="#6a0000" stroke-width="0.6"/>
<circle cx="556.6" cy="676.6" r="3.0" fill="#00006a"/><circle cx="556.6" cy="676.6" r="2.25" fill="#0000f0"/><circle cx="556.6" cy="676.6" r="1.2" fill="#f4f4ec"/>
<circle cx="556.6" cy="686.6" r="3.0" fill="#00006a"/><circle cx="556.6" cy="686.6" r="2.25" fill="#0000f0"/><circle cx="556.6" cy="686.6" r="1.2" fill="#f4f4ec"/>
<rect x="622.3" y="673.9" width="5.4" height="5.4" fill="#f00000" stroke="#6a0000" stroke-width="0.7"/>
<path d="M615.9 695.7l2 -2.6l2 2.6z M615.9 697.3l2 2.6l2 -2.6z" fill="#222"/>
<circle cx="606.9" cy="710.8" r="7.2" fill="#fff" stroke="#222" stroke-width="1"/><line x1="602.4" y1="716.4" x2="597.9" y2="719.6" stroke="#444" stroke-width="0.9"/><line x1="611.4" y1="716.4" x2="615.9" y2="719.6" stroke="#444" stroke-width="0.9"/><line x1="606.9" y1="710.8" x2="602.8" y2="705.9" stroke="#333" stroke-width="1.1"/>
<path d="M625.3 721.5h3l-1.5 2z" fill="#222"/>
<circle cx="606.9" cy="735.7" r="7.2" fill="#fff" stroke="#222" stroke-width="1"/><line x1="602.4" y1="741.3" x2="597.9" y2="744.5" stroke="#444" stroke-width="0.9"/><line x1="611.4" y1="741.3" x2="615.9" y2="744.5" stroke="#444" stroke-width="0.9"/><line x1="606.9" y1="735.7" x2="601.4" y2="732.5" stroke="#333" stroke-width="1.1"/>
<path d="M625.3 746.5h3l-1.5 2z" fill="#222"/>
<path d="M456.6 706.8h5.2l-2.6 4.4z" fill="#111"/>
<circle cx="458.7" cy="724.9" r="2.6" fill="#f00000" stroke="#6a0000" stroke-width="0.6"/>
<circle cx="458.7" cy="735.2" r="3.0" fill="#6a6a00"/><circle cx="458.7" cy="735.2" r="2.25" fill="#f0f000"/><circle cx="458.7" cy="735.2" r="1.2" fill="#f4f4ec"/>
<g transform="translate(460.4,739.4)"><line x1="0" y1="44" x2="90.6" y2="44" stroke="#bbb" stroke-width="0.8"/><path d="M0 36 L1 26 L3 33 L5 27 L14 27 L16 26 L16.5 55 L19 55 L22 55 L22.5 24 L25 31 L27 33 L38 33 L40 28 L53 28 L55 33 L63 33 L65 30 L91 30" fill="none" stroke="#444" stroke-width="0.9"/></g>
<path d="M720.3 647.5h5.2l-2.6 4.4z" fill="#111"/>
<circle cx="723.1" cy="666.9" r="3.0" fill="#6a0000"/><circle cx="723.1" cy="666.9" r="2.25" fill="#f00000"/><circle cx="723.1" cy="666.9" r="1.2" fill="#f4f4ec"/>
<circle cx="723.1" cy="676.8" r="2.6" fill="#f00000" stroke="#6a0000" stroke-width="0.6"/>
<circle cx="723.1" cy="686.3" r="2.6" fill="#f00000" stroke="#6a0000" stroke-width="0.6"/>
<circle cx="723.1" cy="696.2" r="2.6" fill="#f00000" stroke="#6a0000" stroke-width="0.6"/>
<rect x="779.3" y="678.6" width="5.4" height="5.4" fill="#f00000" stroke="#6a0000" stroke-width="0.7"/>
<circle cx="763.1" cy="709.6" r="7.2" fill="#fff" stroke="#222" stroke-width="1"/><line x1="758.6" y1="715.2" x2="754.1" y2="718.4" stroke="#444" stroke-width="0.9"/><line x1="767.6" y1="715.2" x2="772.1" y2="718.4" stroke="#444" stroke-width="0.9"/><line x1="763.1" y1="709.6" x2="767.6" y2="714.1" stroke="#333" stroke-width="1.1"/>
<circle cx="763.1" cy="734.7" r="7.2" fill="#fff" stroke="#222" stroke-width="1"/><line x1="758.6" y1="740.3" x2="754.1" y2="743.5" stroke="#444" stroke-width="0.9"/><line x1="767.6" y1="740.3" x2="772.1" y2="743.5" stroke="#444" stroke-width="0.9"/><line x1="763.1" y1="734.7" x2="767.6" y2="739.2" stroke="#333" stroke-width="1.1"/>
<circle cx="763.1" cy="759.9" r="7.2" fill="#fff" stroke="#222" stroke-width="1"/><line x1="758.6" y1="765.5" x2="754.1" y2="768.7" stroke="#444" stroke-width="0.9"/><line x1="767.6" y1="765.5" x2="772.1" y2="768.7" stroke="#444" stroke-width="0.9"/><line x1="763.1" y1="759.9" x2="757.6" y2="756.7" stroke="#333" stroke-width="1.1"/>
<path d="M788.5 647.5h5.2l-2.6 4.4z" fill="#111"/>
<circle cx="791.3" cy="666.9" r="2.6" fill="#f00000" stroke="#6a0000" stroke-width="0.6"/>
<circle cx="791.3" cy="676.8" r="2.6" fill="#f00000" stroke="#6a0000" stroke-width="0.6"/>
<path d="M338.1 334.4h5.2l-2.6 4.4z" fill="#111"/>
<circle cx="341.4" cy="353.5" r="2.6" fill="#0000f0" stroke="#00006a" stroke-width="0.6"/>
<rect x="387.1" y="350.8" width="5.4" height="5.4" fill="#0000f0" stroke="#00006a" stroke-width="0.7"/>
<circle cx="371.9" cy="366.9" r="7.2" fill="#fff" stroke="#222" stroke-width="1"/><line x1="367.4" y1="372.5" x2="362.9" y2="375.7" stroke="#444" stroke-width="0.9"/><line x1="376.4" y1="372.5" x2="380.9" y2="375.7" stroke="#444" stroke-width="0.9"/><line x1="371.9" y1="366.9" x2="371.9" y2="373.3" stroke="#333" stroke-width="1.1"/>
<path d="M417.4 334.4h5.2l-2.6 4.4z" fill="#111"/>
<circle cx="420.0" cy="353.5" r="2.6" fill="#0000f0" stroke="#00006a" stroke-width="0.6"/>
<circle cx="420.0" cy="363.1" r="2.6" fill="#0000f0" stroke="#00006a" stroke-width="0.6"/>
<circle cx="420.0" cy="373.3" r="2.6" fill="#f0f000" stroke="#6a6a00" stroke-width="0.6"/>
<rect x="455.4" y="360.4" width="5.4" height="5.4" fill="#0000f0" stroke="#00006a" stroke-width="0.7"/>
<path d="M145.0 99.0C174.8 102.0 174.8 102.0 204.6 98.9" fill="none" stroke="#2a962a" stroke-width="1.1"/>
<path d="M145.0 99.0C174.8 142.9 174.8 142.9 204.5 138.0" fill="none" stroke="#2a962a" stroke-width="1.1"/>
<path d="M145.0 99.0C174.8 256.3 174.8 256.3 204.5 246.0" fill="none" stroke="#2a962a" stroke-width="1.1"/>
<path d="M145.0 99.0C174.8 369.5 174.8 369.5 204.5 353.8" fill="none" stroke="#2a962a" stroke-width="1.1"/>
<path d="M67.0 187.4C57.5 250.1 57.5 250.1 48.0 246.2" fill="none" stroke="#2a962a" stroke-width="1.1"/>
<path d="M116.6 196.8C82.3 261.8 82.3 261.8 48.0 255.4" fill="none" stroke="#2a962a" stroke-width="1.1"/>
<path d="M86.6 250.8C52.7 289.9 52.7 289.9 18.8 284.8" fill="none" stroke="#2a962a" stroke-width="1.1"/>
<path d="M86.6 250.8C52.7 331.4 52.7 331.4 18.8 324.3" fill="none" stroke="#2a962a" stroke-width="1.1"/>
<path d="M458.0 196.7C463.3 197.2 463.3 197.2 468.6 196.7" fill="none" stroke="#2a962a" stroke-width="1.1"/>
<path d="M498.2 196.7C503.0 197.2 503.0 197.2 507.8 196.7" fill="none" stroke="#2a962a" stroke-width="1.1"/>
<path d="M498.2 196.7C488.4 228.9 488.4 228.9 478.6 226.4" fill="none" stroke="#2a962a" stroke-width="1.1"/>
<path d="M77.5 104.2C87.2 105.4 87.2 105.4 96.8 98.9" fill="none" stroke="#a09e30" stroke-width="1.1"/>
<path d="M145.0 109.0C81.7 197.7 81.7 197.7 18.3 187.4" fill="none" stroke="#a09e30" stroke-width="1.1"/>
<path d="M67.0 197.1C214.0 222.0 214.0 222.0 361.0 206.8" fill="none" stroke="#a09e30" stroke-width="1.1"/>
<path d="M400.3 158.3C380.6 221.5 380.6 221.5 361.0 216.6" fill="none" stroke="#a09e30" stroke-width="1.1"/>
<path d="M399.7 206.8C404.9 207.8 404.9 207.8 410.0 196.7" fill="none" stroke="#a09e30" stroke-width="1.1"/>
<path d="M399.7 206.8C453.8 212.2 453.8 212.2 507.8 206.8" fill="none" stroke="#a09e30" stroke-width="1.1"/>
<path d="M331.6 148.0C267.2 349.4 198.2 505.2 125.9 529.6" fill="none" stroke="#a09e30" stroke-width="1.1"/>
<path d="M331.6 157.8C238.6 520.6 203.2 566.0 57.8 529.6" fill="none" stroke="#a09e30" stroke-width="1.1"/>
<path d="M331.6 167.5C341.2 548.5 341.2 548.5 350.9 529.4" fill="none" stroke="#a09e30" stroke-width="1.1"/>
<path d="M331.6 177.3C375.8 387.3 375.8 387.3 420.0 373.1" fill="none" stroke="#a09e30" stroke-width="1.1"/>
<path d="M331.6 255.8C424.4 295.5 424.4 295.5 517.1 284.8" fill="none" stroke="#a09e30" stroke-width="1.1"/>
<path d="M331.6 265.6C424.4 357.0 424.4 357.0 517.1 343.8" fill="none" stroke="#a09e30" stroke-width="1.1"/>
<path d="M331.6 275.4C424.7 500.6 424.7 500.6 517.7 481.0" fill="none" stroke="#a09e30" stroke-width="1.1"/>
<path d="M331.6 285.2C458.7 513.7 458.7 513.7 585.7 490.7" fill="none" stroke="#a09e30" stroke-width="1.1"/>
<path d="M458.7 627.5C439.2 691.0 439.2 691.0 419.8 686.1" fill="none" stroke="#a09e30" stroke-width="1.1"/>
<path d="M576.1 284.8C581.0 347.2 581.0 347.2 585.9 343.8" fill="none" stroke="#3434a0" stroke-width="1.1"/>
<path d="M575.4 348.6C649.0 412.7 649.0 412.7 722.7 402.6" fill="none" stroke="#3434a0" stroke-width="1.1"/>
<path d="M645.0 343.8C649.8 344.3 649.8 344.3 654.5 343.8" fill="none" stroke="#3434a0" stroke-width="1.1"/>
<path d="M331.6 363.4C336.6 364.4 336.6 364.4 341.5 353.5" fill="none" stroke="#3434a0" stroke-width="1.1"/>
<path d="M331.6 363.4C375.8 368.3 375.8 368.3 420.0 353.5" fill="none" stroke="#3434a0" stroke-width="1.1"/>
<path d="M389.9 353.5C404.9 365.1 404.9 365.1 420.0 363.1" fill="none" stroke="#3434a0" stroke-width="1.1"/>
<path d="M458.0 363.1C443.6 559.9 443.6 559.9 429.3 549.2" fill="none" stroke="#3434a0" stroke-width="1.1"/>
<path d="M458.3 363.2C353.2 516.7 218.7 649.3 38.3 598.1" fill="none" stroke="#3434a0" stroke-width="1.1"/>
<path d="M458.3 363.2C339.7 587.3 192.2 744.5 38.4 685.5" fill="none" stroke="#3434a0" stroke-width="1.1"/>
<path d="M145.5 334.0C105.3 563.7 78.7 595.2 38.3 588.5" fill="none" stroke="#3434a0" stroke-width="1.1"/>
<path d="M76.7 593.1C57.5 631.2 57.5 631.2 38.4 627.6" fill="none" stroke="#3434a0" stroke-width="1.1"/>
<path d="M116.1 529.6C170.1 545.4 170.1 545.4 224.2 539.5" fill="none" stroke="#3434a0" stroke-width="1.1"/>
<path d="M185.2 529.6C204.7 552.2 204.7 552.2 224.2 549.3" fill="none" stroke="#3434a0" stroke-width="1.1"/>
<path d="M272.9 539.5C277.9 540.5 277.9 540.5 282.8 529.6" fill="none" stroke="#3434a0" stroke-width="1.1"/>
<path d="M272.9 539.5C219.1 637.4 219.1 637.4 165.4 627.6" fill="none" stroke="#3434a0" stroke-width="1.1"/>
<path d="M409.7 529.4C419.5 541.2 419.5 541.2 429.3 539.7" fill="none" stroke="#3434a0" stroke-width="1.1"/>
<path d="M477.9 539.7C483.0 550.0 483.0 550.0 488.1 549.0" fill="none" stroke="#3434a0" stroke-width="1.1"/>
<path d="M477.9 539.7C365.5 653.4 365.5 653.4 253.2 637.3" fill="none" stroke="#3434a0" stroke-width="1.1"/>
<path d="M576.3 481.0C581.0 481.5 581.0 481.5 585.7 481.0" fill="none" stroke="#3434a0" stroke-width="1.1"/>
<path d="M643.7 485.5C649.0 486.3 649.0 486.3 654.3 481.0" fill="none" stroke="#3434a0" stroke-width="1.1"/>
<path d="M645.0 284.8C654.8 285.8 654.8 285.8 664.6 284.8" fill="none" stroke="#a83030" stroke-width="1.1"/>
<path d="M712.8 284.8C717.8 285.3 717.8 285.3 722.7 284.8" fill="none" stroke="#a83030" stroke-width="1.1"/>
<path d="M781.7 284.8C752.2 349.7 752.2 349.7 722.7 343.8" fill="none" stroke="#a83030" stroke-width="1.1"/>
<path d="M713.6 353.6C718.2 354.1 718.2 354.1 722.7 353.6" fill="none" stroke="#a83030" stroke-width="1.1"/>
<path d="M761.6 348.6C742.2 397.0 742.2 397.0 722.7 392.8" fill="none" stroke="#a83030" stroke-width="1.1"/>
<path d="M761.6 397.5C766.7 398.2 766.7 398.2 771.7 392.8" fill="none" stroke="#a83030" stroke-width="1.1"/>
<path d="M761.6 397.5C742.4 692.7 742.4 692.7 723.1 676.8" fill="none" stroke="#a83030" stroke-width="1.1"/>
<path d="M830.4 480.7C835.5 481.2 835.5 481.2 840.7 480.7" fill="none" stroke="#a83030" stroke-width="1.1"/>
<path d="M830.4 480.7C776.8 701.9 776.8 701.9 723.1 686.3" fill="none" stroke="#a83030" stroke-width="1.1"/>
<path d="M762.4 480.7C767.0 481.2 767.0 481.2 771.5 480.7" fill="none" stroke="#a83030" stroke-width="1.1"/>
<path d="M693.0 485.5C698.1 486.3 698.1 486.3 703.3 480.7" fill="none" stroke="#a83030" stroke-width="1.1"/>
<path d="M644.9 450.5C649.6 493.2 649.6 493.2 654.3 490.7" fill="none" stroke="#a83030" stroke-width="1.1"/>
<path d="M625.0 676.6C674.0 702.1 674.0 702.1 723.1 696.2" fill="none" stroke="#a83030" stroke-width="1.1"/>
<path d="M625.0 676.6C541.9 735.6 541.9 735.6 458.7 724.9" fill="none" stroke="#a83030" stroke-width="1.1"/>
<path d="M527.3 666.7C542.0 668.2 542.0 668.2 556.6 666.5" fill="none" stroke="#a83030" stroke-width="1.1"/>
<path d="M458.2 676.3C463.4 677.3 463.4 677.3 468.5 666.7" fill="none" stroke="#a83030" stroke-width="1.1"/>
<path d="M410.1 627.5C415.0 669.1 415.0 669.1 419.8 666.7" fill="none" stroke="#a83030" stroke-width="1.1"/>
<path d="M350.9 656.9C385.4 680.7 385.4 680.7 419.8 676.3" fill="none" stroke="#a83030" stroke-width="1.1"/>
<path d="M370.1 627.5C375.2 628.0 375.2 628.0 380.3 627.5" fill="none" stroke="#a83030" stroke-width="1.1"/>
<path d="M312.1 637.3C317.0 638.3 317.0 638.3 321.9 627.5" fill="none" stroke="#a83030" stroke-width="1.1"/>
<path d="M312.1 637.3C317.0 658.4 317.0 658.4 321.9 656.9" fill="none" stroke="#a83030" stroke-width="1.1"/>
<path d="M312.1 637.3C317.0 689.2 317.0 689.2 321.9 686.3" fill="none" stroke="#a83030" stroke-width="1.1"/>
<path d="M233.7 627.6C243.4 628.6 243.4 628.6 253.2 627.5" fill="none" stroke="#a83030" stroke-width="1.1"/>
<path d="M194.2 631.9C199.3 632.6 199.3 632.6 204.5 627.6" fill="none" stroke="#a83030" stroke-width="1.1"/>
<path d="M155.1 637.1C160.2 637.6 160.2 637.6 165.4 637.1" fill="none" stroke="#a83030" stroke-width="1.1"/>
<path d="M97.1 627.6C101.9 638.1 101.9 638.1 106.7 637.1" fill="none" stroke="#a83030" stroke-width="1.1"/>
<path d="M97.1 685.5C101.9 687.9 101.9 687.9 106.7 647.2" fill="none" stroke="#a83030" stroke-width="1.1"/>
<path d="M782.0 681.3C786.6 682.5 786.6 682.5 791.3 666.9" fill="none" stroke="#a83030" stroke-width="1.1"/>
<path d="M782.0 681.3C786.6 682.0 786.6 682.0 791.3 676.8" fill="none" stroke="#a83030" stroke-width="1.1"/>
</svg></div>
</body></html>
